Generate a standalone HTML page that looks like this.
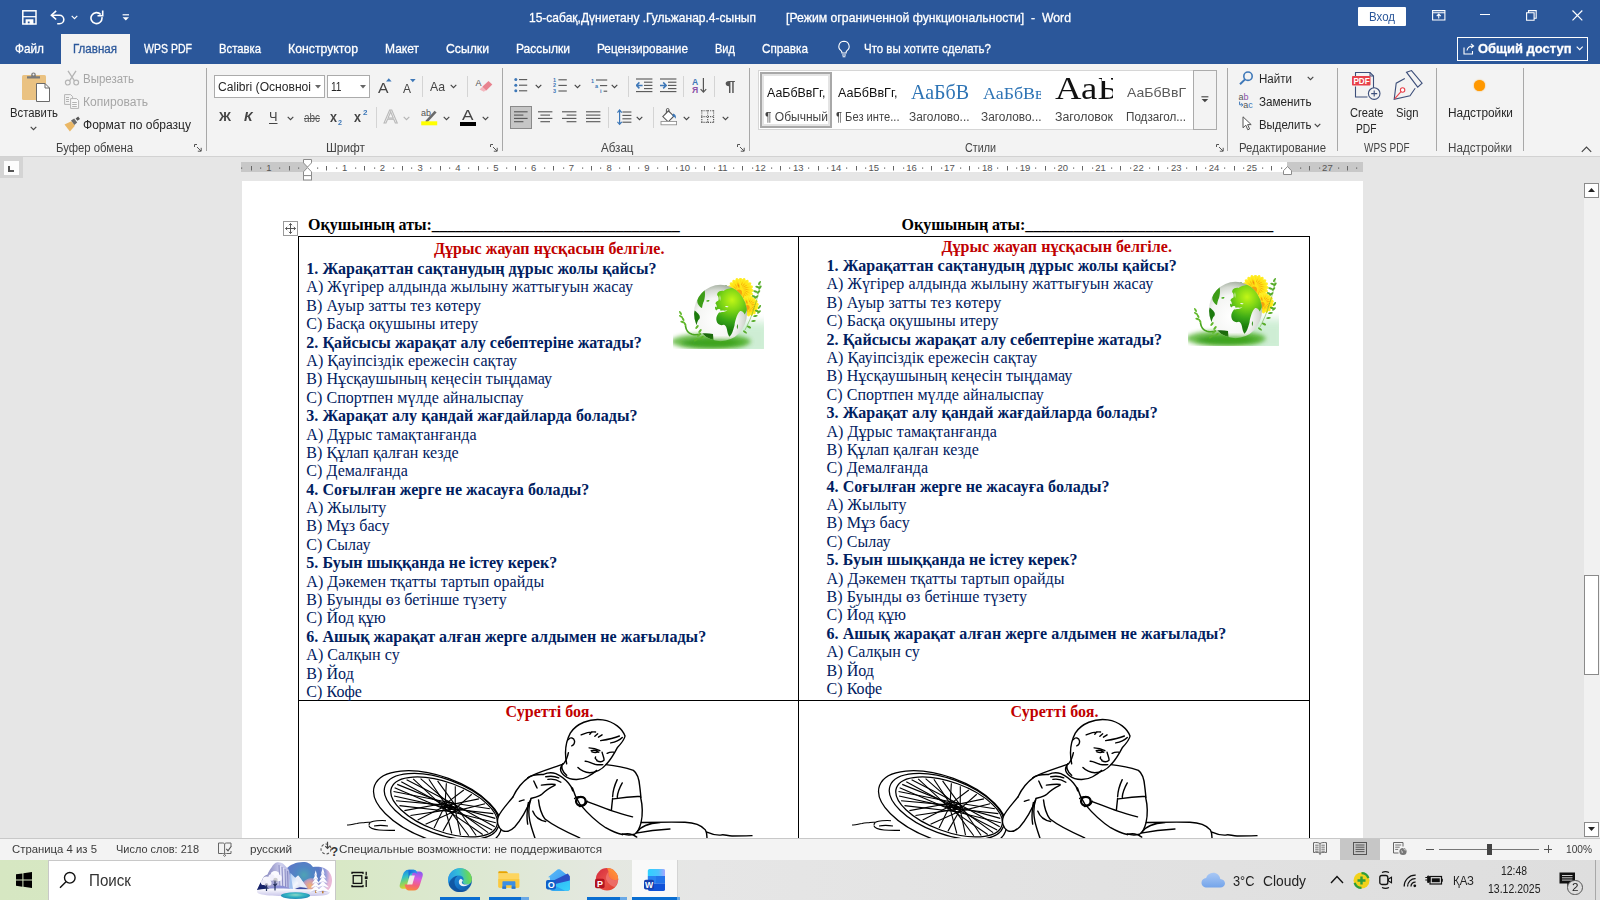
<!DOCTYPE html>
<html lang="ru"><head><meta charset="utf-8"><title>Word</title>
<style>
html,body{margin:0;padding:0;width:1600px;height:900px;overflow:hidden;background:#e6e6e6;font-family:"Liberation Sans",sans-serif}
#r{position:relative;width:1600px;height:900px;overflow:hidden}
.b{position:absolute;display:block}
.t{position:absolute;white-space:pre;transform-origin:0 50%;font-family:"Liberation Sans",sans-serif}
.d{position:absolute;white-space:pre;font-family:"Liberation Serif",serif;font-size:16px;line-height:18px;color:#002060;letter-spacing:.055px}
</style></head><body><div id="r">
<!-- p_title -->
<div class="b" style="left:0px;top:0px;width:1600px;height:64px;background:#2b579a"></div><svg class="b" style="left:21.5px;top:9.5px;" width="15" height="15" viewBox="0 0 15 15"><rect x=".8" y=".8" width="13.200" height="13.200" fill="none" stroke="#fff" stroke-width="1.500"/><path d="M1 6.700h13" stroke="#fff" stroke-width="1.300"/><path d="M3.600 9.200h7.800v5h-3.800v-2.600h-1.800v2.600h-2.200z" fill="#fff"/></svg><svg class="b" style="left:50px;top:9.5px;" width="16" height="15" viewBox="0 0 16 15"><path d="M6.200 .9l-4.800 4.300 4.800 4.300" fill="none" stroke="#fff" stroke-width="1.600"/><path d="M1.800 5.200h7.700a4.300 4.300 0 0 1 0 8.600h-2.300" fill="none" stroke="#fff" stroke-width="1.600"/></svg><svg class="b" style="left:71px;top:15px;" width="7" height="5" viewBox="0 0 7 5"><path d="M.7.800l2.800 2.800 2.800-2.800" fill="none" stroke="#fff" stroke-width="1.100"/></svg><svg class="b" style="left:89.5px;top:9.5px;" width="15" height="15" viewBox="0 0 15 15"><path d="M11.900 7.200a5.500 5.500 0 1 1-1.200-2.600" fill="none" stroke="#fff" stroke-width="1.600"/><path d="M12.700 .6v5.200h-5.200" fill="none" stroke="#fff" stroke-width="1.600"/></svg><svg class="b" style="left:122px;top:13.5px;" width="8" height="7" viewBox="0 0 8 7"><path d="M.6 .8h6.400" stroke="#fff" stroke-width="1.200"/><path d="M.6 3.300h6.400l-3.200 3.200z" fill="#fff"/></svg><span class="t" style="left:529px;top:9px;font-size:13px;line-height:17px;color:#fff;-webkit-text-stroke:.3px #fff;transform:scaleX(0.9243);">15-сабақ,Дүниетану .Гульжанар.4-сынып</span><span class="t" style="left:786px;top:9px;font-size:13px;line-height:17px;color:#fff;-webkit-text-stroke:.3px #fff;transform:scaleX(0.9418);">[Режим ограниченной функциональности]  -  Word</span><div class="b" style="left:1358px;top:7px;width:48px;height:19px;background:#fff;border-radius:1px"></div><span class="t" style="left:1369px;top:8.5px;font-size:12px;line-height:16px;color:#2b579a;transform:scaleX(0.9574);">Вход</span><svg class="b" style="left:1432px;top:9.5px;" width="14" height="11" viewBox="0 0 14 11"><path d="M.6.600h12.300v9.400h-12.300z M.6 2.800h12.300" fill="none" stroke="#fff" stroke-width="1.100"/><path d="M6.750 4.200v4.400 M4.700 6.100l2.050-2 2.050 2" fill="none" stroke="#fff" stroke-width="1.100"/></svg><div class="b" style="left:1480px;top:14px;width:10px;height:1px;background:#fff"></div><svg class="b" style="left:1526px;top:9.5px;" width="11" height="11" viewBox="0 0 11 11"><path d="M.6 2.700h7.500v7.500h-7.500z M2.600 2.600v-2h7.600v7.600h-2" fill="none" stroke="#fff" stroke-width="1.100"/></svg><svg class="b" style="left:1571.5px;top:9.5px;" width="11" height="11" viewBox="0 0 11 11"><path d="M.5.500l9.800 9.800 M10.300.500l-9.800 9.800" stroke="#fff" stroke-width="1.200"/></svg><div class="b" style="left:61px;top:34px;width:69px;height:30px;background:#f3f3f3"></div><span class="t" style="left:15px;top:40px;font-size:13px;line-height:17px;color:#fff;-webkit-text-stroke:.3px #fff;transform:scaleX(0.9071);">Файл</span><span class="t" style="left:73px;top:40px;font-size:13px;line-height:17px;color:#2b579a;transform:scaleX(0.8892);-webkit-text-stroke:.3px #2b579a;">Главная</span><span class="t" style="left:144px;top:40px;font-size:13px;line-height:17px;color:#fff;-webkit-text-stroke:.3px #fff;transform:scaleX(0.8103);">WPS PDF</span><span class="t" style="left:219px;top:40px;font-size:13px;line-height:17px;color:#fff;-webkit-text-stroke:.3px #fff;transform:scaleX(0.8691);">Вставка</span><span class="t" style="left:288px;top:40px;font-size:13px;line-height:17px;color:#fff;-webkit-text-stroke:.3px #fff;transform:scaleX(0.9444);">Конструктор</span><span class="t" style="left:385px;top:40px;font-size:13px;line-height:17px;color:#fff;-webkit-text-stroke:.3px #fff;transform:scaleX(0.9240);">Макет</span><span class="t" style="left:446px;top:40px;font-size:13px;line-height:17px;color:#fff;-webkit-text-stroke:.3px #fff;transform:scaleX(0.9392);">Ссылки</span><span class="t" style="left:516px;top:40px;font-size:13px;line-height:17px;color:#fff;-webkit-text-stroke:.3px #fff;transform:scaleX(0.9253);">Рассылки</span><span class="t" style="left:597px;top:40px;font-size:13px;line-height:17px;color:#fff;-webkit-text-stroke:.3px #fff;transform:scaleX(0.9065);">Рецензирование</span><span class="t" style="left:715px;top:40px;font-size:13px;line-height:17px;color:#fff;-webkit-text-stroke:.3px #fff;transform:scaleX(0.8499);">Вид</span><span class="t" style="left:762px;top:40px;font-size:13px;line-height:17px;color:#fff;-webkit-text-stroke:.3px #fff;transform:scaleX(0.9020);">Справка</span><svg class="b" style="left:837px;top:40px;" width="14" height="18" viewBox="0 0 14 18"><path d="M7 1.2a5.2 5.2 0 0 0-3 9.4c.6.5.9 1 .9 1.8v.6h4.2v-.6c0-.8.3-1.3.9-1.8a5.2 5.2 0 0 0-3-9.4z M5 15h4 M5.6 16.8h2.8" fill="none" stroke="#fff" stroke-width="1.1"/></svg><span class="t" style="left:864px;top:40px;font-size:13px;line-height:17px;color:#fff;-webkit-text-stroke:.3px #fff;transform:scaleX(0.8837);">Что вы хотите сделать?</span><div class="b" style="left:1457px;top:37px;width:131px;height:24px;border:1px solid #fff;box-sizing:border-box"></div><svg class="b" style="left:1463px;top:43px;" width="12" height="12" viewBox="0 0 12 12"><path d="M1 4.5v6.5h8.5v-3 M4 7.5c.5-3 2.5-4.5 6-4.5 M8 .8l2.6 2.2-2.6 2.2" fill="none" stroke="#fff" stroke-width="1.1"/></svg><span class="t" style="left:1478px;top:39.5px;font-size:13.5px;line-height:18px;color:#fff;font-weight:700;-webkit-text-stroke:.3px #fff;transform:scaleX(0.9605);">Общий доступ</span><svg class="b" style="left:1576px;top:46px;" width="8" height="5" viewBox="0 0 8 5"><path d="M.7.7l3 3 3-3" fill="none" stroke="#fff" stroke-width="1.1"/></svg>
<!-- p_ribbon -->
<div class="b" style="left:0px;top:64px;width:1600px;height:92px;background:#f3f3f3"></div><div class="b" style="left:0px;top:156px;width:1600px;height:1px;background:#d2d2d2"></div><svg class="b" style="left:20px;top:70px;" width="32" height="34" viewBox="0 0 32 34"><rect x="2" y="5" width="24" height="25" rx="1.5" fill="#eac282"/><path d="M7 8.5v-2.2h4.2v-1.6a2 2 0 0 1 4.6 0v1.6h4.2v2.2z" fill="#7a7a7a"/><circle cx="13.5" cy="4.6" r="1" fill="#f3f3f3"/><path d="M16.5 13.5h8.5l4.5 4.5v13.5h-13z" fill="#fff" stroke="#6a6a6a" stroke-width="1"/><path d="M25 13.5v4.5h4.5" fill="none" stroke="#6a6a6a" stroke-width="1"/></svg><span class="t" style="left:10px;top:105px;font-size:12.5px;line-height:16px;color:#262626;transform:scaleX(0.9057);">Вставить</span><svg class="b" style="left:30px;top:126px;" width="7" height="5" viewBox="0 0 7 5"><path d="M.7.9l2.8 2.8 2.8-2.8" fill="none" stroke="#444" stroke-width="1.15"/></svg><svg class="b" style="left:64px;top:70px;" width="16" height="16" viewBox="0 0 16 16"><path d="M4 .8l6.5 10 M12 .8l-6.5 10" stroke="#b4b4b4" stroke-width="1.3" fill="none"/><circle cx="3.8" cy="12.6" r="2.4" fill="none" stroke="#b4b4b4" stroke-width="1.2"/><circle cx="12.2" cy="12.6" r="2.4" fill="none" stroke="#b4b4b4" stroke-width="1.2"/></svg><span class="t" style="left:83px;top:71px;font-size:12.5px;line-height:16px;color:#a6a6a6;transform:scaleX(0.9171);">Вырезать</span><svg class="b" style="left:64px;top:94px;" width="16" height="15" viewBox="0 0 16 15"><path d="M.6.6h6l2 2v7.8h-8z" fill="#f3f3f3" stroke="#b4b4b4"/><path d="M2 3.5h3M2 5.5h3M2 7.5h3" stroke="#b4b4b4"/><path d="M6.6 4.6h6l2 2v7.8h-8z" fill="#f8f8f8" stroke="#b4b4b4"/><path d="M8.2 8.5h4.6M8.2 10.5h4.6M8.2 12.5h4.6" stroke="#b4b4b4"/></svg><span class="t" style="left:83px;top:94px;font-size:12.5px;line-height:16px;color:#a6a6a6;transform:scaleX(0.9656);">Копировать</span><svg class="b" style="left:64px;top:116px;" width="17" height="16" viewBox="0 0 17 16"><path d="M.5 8.5l6.8-3.3 3.6 4.6-5 5.6z" fill="#eab765"/><path d="M7 4.6l3.2-2 3 4-2.8 2.4z" fill="#6a6a6a"/><path d="M11.6 2.4l2.6-1.8 1.8 2.3-2.6 1.9z" fill="#555"/></svg><span class="t" style="left:83px;top:117px;font-size:12.5px;line-height:16px;color:#262626;transform:scaleX(0.9635);">Формат по образцу</span><span class="t" style="left:56px;top:140px;font-size:12px;line-height:16px;color:#444;transform:scaleX(0.9442);">Буфер обмена</span><svg class="b" style="left:194px;top:144px;" width="8" height="8" viewBox="0 0 8 8"><path d="M.5 3v-2.5h2.5 M3 3l4 4 M7.2 3.8v3.4h-3.4" fill="none" stroke="#555" stroke-width="1"/></svg><div class="b" style="left:206px;top:68px;width:1px;height:83px;background:#a8a8a8"></div><div class="b" style="left:214px;top:75px;width:111px;height:23px;background:#fff;border:1px solid #ababab;box-sizing:border-box"></div><span class="t" style="left:218px;top:78.5px;font-size:12.5px;line-height:16px;color:#262626;transform:scaleX(0.9670);">Calibri (Основноі</span><svg class="b" style="left:314.5px;top:84.5px;" width="6" height="4" viewBox="0 0 6 4"><path d="M0 0h6l-3 3.4z" fill="#666"/></svg><div class="b" style="left:327px;top:75px;width:43px;height:23px;background:#fff;border:1px solid #ababab;box-sizing:border-box"></div><span class="t" style="left:330.5px;top:78.5px;font-size:12.5px;line-height:16px;color:#262626;transform:scaleX(0.8087);">11</span><svg class="b" style="left:359.5px;top:84.5px;" width="6" height="4" viewBox="0 0 6 4"><path d="M0 0h6l-3 3.4z" fill="#666"/></svg><span class="t" style="left:378px;top:77.5px;font-size:15px;line-height:20px;color:#444;transform:scaleX(1.0484);">A</span><svg class="b" style="left:386px;top:78px;" width="6" height="4" viewBox="0 0 6 4"><path d="M0 3.5h5.6l-2.8-3.3z" fill="#3e78b8"/></svg><span class="t" style="left:403px;top:81px;font-size:12px;line-height:16px;color:#444;transform:scaleX(0.9981);">A</span><svg class="b" style="left:410px;top:79px;" width="6" height="4" viewBox="0 0 6 4"><path d="M0 0h5.6l-2.8 3.3z" fill="#3e78b8"/></svg><div class="b" style="left:422px;top:76px;width:1px;height:21px;background:#d4d4d4"></div><span class="t" style="left:430px;top:77.5px;font-size:13px;line-height:17px;color:#444;transform:scaleX(0.9430);">Aa</span><svg class="b" style="left:450px;top:84px;" width="7" height="5" viewBox="0 0 7 5"><path d="M.7.9l2.8 2.8 2.8-2.8" fill="none" stroke="#444" stroke-width="1.15"/></svg><div class="b" style="left:467px;top:76px;width:1px;height:21px;background:#d4d4d4"></div><svg class="b" style="left:475px;top:77px;" width="18" height="17" viewBox="0 0 18 17"><text x="0.5" y="9" font-family="Liberation Sans, sans-serif" font-size="9" fill="#555">A</text><path d="M7.5 9.5l6-5.5 3.8 3.6-6 5.8-3-.6z" fill="#e8838f"/><path d="M4.5 12.5l3-2.8 3.4 3.3-2 1.8z" fill="#f3b6bd"/></svg><span class="t" style="left:219px;top:108px;font-size:13.5px;line-height:18px;color:#444;font-weight:700;transform:scaleX(0.9834);">Ж</span><span class="t" style="left:244px;top:108px;font-size:13.5px;line-height:18px;color:#444;font-weight:700;font-style:italic;transform:scaleX(1.0226);">К</span><span class="t" style="left:268.5px;top:108px;font-size:13.5px;line-height:18px;color:#444;transform:scaleX(0.9444);text-decoration:underline;text-underline-offset:2px">Ч</span><svg class="b" style="left:286.5px;top:116px;" width="7" height="5" viewBox="0 0 7 5"><path d="M.7.9l2.8 2.8 2.8-2.8" fill="none" stroke="#444" stroke-width="1.15"/></svg><span class="t" style="left:304px;top:109.5px;font-size:12px;line-height:16px;color:#555;transform:scaleX(0.8265);text-decoration:line-through">abc</span><span class="t" style="left:330px;top:108px;font-size:14px;line-height:18px;color:#444;font-weight:700;transform:scaleX(0.8978);">x</span><span class="t" style="left:338px;top:118px;font-size:7px;line-height:9px;color:#3e78b8;font-weight:700;transform:scaleX(1.0240);">2</span><span class="t" style="left:354px;top:108px;font-size:14px;line-height:18px;color:#444;font-weight:700;transform:scaleX(0.8978);">x</span><span class="t" style="left:362.5px;top:108px;font-size:7px;line-height:9px;color:#3e78b8;font-weight:700;transform:scaleX(1.1520);">2</span><div class="b" style="left:375.5px;top:107px;width:1px;height:21px;background:#d4d4d4"></div><span class="t" style="left:384px;top:105px;font-size:19px;line-height:24px;color:#f3f3f3;-webkit-text-stroke:1px #b9b9b9;transform:scaleX(1.05)">A</span><svg class="b" style="left:403px;top:116px;" width="7" height="5" viewBox="0 0 7 5"><path d="M.7.9l2.8 2.8 2.8-2.8" fill="none" stroke="#b4b4b4" stroke-width="1.15"/></svg><svg class="b" style="left:420px;top:107px;" width="18" height="19" viewBox="0 0 18 19"><text x="1" y="8.5" font-family="Liberation Sans, sans-serif" font-size="9" fill="#555">ab</text><path d="M6 13.2l8.6-9.4 2 1.8-8.6 9.2-2.6.6z" fill="#6a6a6a"/><rect x="1.2" y="14.3" width="16" height="4" fill="#ffff00"/></svg><svg class="b" style="left:443px;top:116px;" width="7" height="5" viewBox="0 0 7 5"><path d="M.7.9l2.8 2.8 2.8-2.8" fill="none" stroke="#444" stroke-width="1.15"/></svg><span class="t" style="left:462px;top:105px;font-size:15px;line-height:20px;color:#444;transform:scaleX(1.1482);">A</span><div class="b" style="left:460px;top:121.5px;width:16px;height:4px;background:#000"></div><svg class="b" style="left:482px;top:116px;" width="7" height="5" viewBox="0 0 7 5"><path d="M.7.9l2.8 2.8 2.8-2.8" fill="none" stroke="#444" stroke-width="1.15"/></svg><span class="t" style="left:326px;top:140px;font-size:12px;line-height:16px;color:#444;transform:scaleX(0.9877);">Шрифт</span><svg class="b" style="left:490px;top:144px;" width="8" height="8" viewBox="0 0 8 8"><path d="M.5 3v-2.5h2.5 M3 3l4 4 M7.2 3.8v3.4h-3.4" fill="none" stroke="#555" stroke-width="1"/></svg><div class="b" style="left:501.5px;top:68px;width:1px;height:83px;background:#a8a8a8"></div><svg class="b" style="left:513.5px;top:78px;" width="14" height="15" viewBox="0 0 14 15"><circle cx="1.8" cy="1.6" r="1.5" fill="#3e78b8"/><path d="M5 1.6h8.2" stroke="#555" stroke-width="1.1"/><circle cx="1.8" cy="7.2" r="1.5" fill="#3e78b8"/><path d="M5 7.2h8.2" stroke="#555" stroke-width="1.1"/><circle cx="1.8" cy="12.8" r="1.5" fill="#3e78b8"/><path d="M5 12.8h8.2" stroke="#555" stroke-width="1.1"/></svg><svg class="b" style="left:534.5px;top:84px;" width="7" height="5" viewBox="0 0 7 5"><path d="M.7.9l2.8 2.8 2.8-2.8" fill="none" stroke="#444" stroke-width="1.15"/></svg><svg class="b" style="left:552.5px;top:78px;" width="14" height="16" viewBox="0 0 14 16"><text x="0" y="3.8" font-family="Liberation Sans, sans-serif" font-size="5.5" font-weight="700" fill="#3e78b8">1</text><path d="M5.4 1.8h8.4" stroke="#555" stroke-width="1.1"/><text x="0" y="9.4" font-family="Liberation Sans, sans-serif" font-size="5.5" font-weight="700" fill="#3e78b8">2</text><path d="M5.4 7.4h8.4" stroke="#555" stroke-width="1.1"/><text x="0" y="15" font-family="Liberation Sans, sans-serif" font-size="5.5" font-weight="700" fill="#3e78b8">3</text><path d="M5.4 13h8.4" stroke="#555" stroke-width="1.1"/></svg><svg class="b" style="left:573.5px;top:84px;" width="7" height="5" viewBox="0 0 7 5"><path d="M.7.9l2.8 2.8 2.8-2.8" fill="none" stroke="#444" stroke-width="1.15"/></svg><svg class="b" style="left:590.5px;top:78px;" width="17" height="16" viewBox="0 0 17 16"><text x="0" y="4.6" font-family="Liberation Sans, sans-serif" font-size="5.5" font-weight="700" fill="#3e78b8">1</text><path d="M5 2h11.2" stroke="#555" stroke-width="1.1"/><text x="4" y="10" font-family="Liberation Sans, sans-serif" font-size="5.5" font-weight="700" fill="#3e78b8">a</text><path d="M9 7.6h7.2" stroke="#555" stroke-width="1.1"/><text x="9" y="15.4" font-family="Liberation Sans, sans-serif" font-size="5.5" font-weight="700" fill="#3e78b8">i</text><path d="M12.6 13.2h3.6" stroke="#555" stroke-width="1.1"/></svg><svg class="b" style="left:611px;top:84px;" width="7" height="5" viewBox="0 0 7 5"><path d="M.7.9l2.8 2.8 2.8-2.8" fill="none" stroke="#444" stroke-width="1.15"/></svg><div class="b" style="left:628px;top:76px;width:1px;height:21px;background:#d4d4d4"></div><svg class="b" style="left:635.5px;top:78px;" width="17" height="15" viewBox="0 0 17 15"><path d="M0 1H16.4" stroke="#555" stroke-width="1.1"/><path d="M8 4.2H16.4" stroke="#555" stroke-width="1.1"/><path d="M8 7.4H16.4" stroke="#555" stroke-width="1.1"/><path d="M8 10.6H16.4" stroke="#555" stroke-width="1.1"/><path d="M0 13.6H16.4" stroke="#555" stroke-width="1.1"/><path d="M.6 7.4h6 M3.4 4.4l-3 3 3 3" fill="none" stroke="#3e78b8" stroke-width="1.5"/></svg><svg class="b" style="left:660px;top:78px;" width="17" height="15" viewBox="0 0 17 15"><path d="M0 1H16.4" stroke="#555" stroke-width="1.1"/><path d="M8 4.2H16.4" stroke="#555" stroke-width="1.1"/><path d="M8 7.4H16.4" stroke="#555" stroke-width="1.1"/><path d="M8 10.6H16.4" stroke="#555" stroke-width="1.1"/><path d="M0 13.6H16.4" stroke="#555" stroke-width="1.1"/><path d="M0 7.4h6 M3.2 4.4l3 3-3 3" fill="none" stroke="#3e78b8" stroke-width="1.5"/></svg><div class="b" style="left:683px;top:76px;width:1px;height:21px;background:#d4d4d4"></div><svg class="b" style="left:692px;top:77px;" width="16" height="17" viewBox="0 0 16 17"><text x="0" y="7.6" font-family="Liberation Sans, sans-serif" font-size="8.6" font-weight="700" fill="#3e78b8">А</text><text x="0" y="15.8" font-family="Liberation Sans, sans-serif" font-size="8.6" font-weight="700" fill="#8a52a8">Я</text><path d="M11.4 1v14 M8.6 12.2l2.8 3 2.8-3" fill="none" stroke="#555" stroke-width="1.2"/></svg><div class="b" style="left:714px;top:76px;width:1px;height:21px;background:#d4d4d4"></div><span class="t" style="left:724.5px;top:76px;font-size:15px;line-height:20px;color:#555;font-weight:700;transform:scaleX(1.2584);">¶</span><div class="b" style="left:510px;top:106px;width:22px;height:23px;background:#c6c6c6;border:1px solid #8a8a8a;box-sizing:border-box"></div><svg class="b" style="left:513.5px;top:110px;" width="15" height="14" viewBox="0 0 15 14"><path d="M0 1.8H13.6" stroke="#555" stroke-width="1.1"/><path d="M0 5.1H9.4" stroke="#555" stroke-width="1.1"/><path d="M0 8.4H13.6" stroke="#555" stroke-width="1.1"/><path d="M0 11.7H9.4" stroke="#555" stroke-width="1.1"/></svg><svg class="b" style="left:537.5px;top:110px;" width="15" height="14" viewBox="0 0 15 14"><path d="M0 1.8H14.4" stroke="#555" stroke-width="1.1"/><path d="M2.4 5.1H12" stroke="#555" stroke-width="1.1"/><path d="M0 8.4H14.4" stroke="#555" stroke-width="1.1"/><path d="M2.4 11.7H12" stroke="#555" stroke-width="1.1"/></svg><svg class="b" style="left:561.5px;top:110px;" width="15" height="14" viewBox="0 0 15 14"><path d="M0 1.8H14.4" stroke="#555" stroke-width="1.1"/><path d="M4.6 5.1H14.4" stroke="#555" stroke-width="1.1"/><path d="M0 8.4H14.4" stroke="#555" stroke-width="1.1"/><path d="M4.6 11.7H14.4" stroke="#555" stroke-width="1.1"/></svg><svg class="b" style="left:585.5px;top:110px;" width="15" height="14" viewBox="0 0 15 14"><path d="M0 1.8H14.4" stroke="#555" stroke-width="1.1"/><path d="M0 5.1H14.4" stroke="#555" stroke-width="1.1"/><path d="M0 8.4H14.4" stroke="#555" stroke-width="1.1"/><path d="M0 11.7H14.4" stroke="#555" stroke-width="1.1"/></svg><div class="b" style="left:608px;top:107px;width:1px;height:21px;background:#d4d4d4"></div><svg class="b" style="left:616.5px;top:109px;" width="15" height="17" viewBox="0 0 15 17"><path d="M5.4 3H14.4" stroke="#555" stroke-width="1.1"/><path d="M5.4 6.4H14.4" stroke="#555" stroke-width="1.1"/><path d="M5.4 9.8H14.4" stroke="#555" stroke-width="1.1"/><path d="M5.4 13.2H14.4" stroke="#555" stroke-width="1.1"/><path d="M2.6 1v14.4 M.4 3.6l2.2-2.6 2.2 2.6 M.4 12.8l2.2 2.6 2.2-2.6" fill="none" stroke="#3e78b8" stroke-width="1.2"/></svg><svg class="b" style="left:636px;top:116px;" width="7" height="5" viewBox="0 0 7 5"><path d="M.7.9l2.8 2.8 2.8-2.8" fill="none" stroke="#444" stroke-width="1.15"/></svg><div class="b" style="left:653px;top:107px;width:1px;height:21px;background:#d4d4d4"></div><svg class="b" style="left:660px;top:108px;" width="18" height="18" viewBox="0 0 18 18"><path d="M2.8 8.6l5.6-5.8 5.4 5.4-5.6 5.6z" fill="#fff" stroke="#555" stroke-width="1.1"/><path d="M6.4 5.2v-3.4a1.3 1.3 0 0 1 2.6 0v2.4" fill="none" stroke="#555" stroke-width="1"/><path d="M13.2 5.6c2 .6 3.2 2.4 2.6 5.2-1-1.6-1.8-2.4-3.6-2.8z" fill="#3e78b8"/><rect x="1" y="13.4" width="15.6" height="3.4" fill="#fff" stroke="#888" stroke-width=".8"/></svg><svg class="b" style="left:683px;top:116px;" width="7" height="5" viewBox="0 0 7 5"><path d="M.7.9l2.8 2.8 2.8-2.8" fill="none" stroke="#444" stroke-width="1.15"/></svg><svg class="b" style="left:700.5px;top:110px;" width="14" height="14" viewBox="0 0 14 14"><path d="M.3 0.8h12.8" stroke="#555" stroke-width="1.1" stroke-dasharray="1.1 1.1"/><path d="M.3 6.6h12.8" stroke="#555" stroke-width="1.1" stroke-dasharray="1.1 1.1"/><path d="M.3 12.4h12.8" stroke="#555" stroke-width="1.1" stroke-dasharray="1.1 1.1"/><path d="M0.8 .3v12.6" stroke="#555" stroke-width="1.1" stroke-dasharray="1.1 1.1"/><path d="M6.7 .3v12.6" stroke="#555" stroke-width="1.1" stroke-dasharray="1.1 1.1"/><path d="M12.6 .3v12.6" stroke="#555" stroke-width="1.1" stroke-dasharray="1.1 1.1"/></svg><svg class="b" style="left:722px;top:116px;" width="7" height="5" viewBox="0 0 7 5"><path d="M.7.9l2.8 2.8 2.8-2.8" fill="none" stroke="#444" stroke-width="1.15"/></svg><span class="t" style="left:601px;top:140px;font-size:12px;line-height:16px;color:#444;transform:scaleX(0.9652);">Абзац</span><svg class="b" style="left:737px;top:144px;" width="8" height="8" viewBox="0 0 8 8"><path d="M.5 3v-2.5h2.5 M3 3l4 4 M7.2 3.8v3.4h-3.4" fill="none" stroke="#555" stroke-width="1"/></svg><div class="b" style="left:748.5px;top:68px;width:1px;height:83px;background:#a8a8a8"></div>
<!-- p_ribbon2 -->
<div class="b" style="left:758px;top:70px;width:436px;height:60px;background:#fff;border:1px solid #d6d6d6;box-sizing:border-box"></div><div class="b" style="left:760px;top:72px;width:72px;height:56px;background:#fff;border:2px solid #a8a8a8;box-sizing:border-box;box-shadow:inset 0 0 0 2px #e4e4e4"></div><span class="t" style="left:766.5px;top:84px;font-size:13px;line-height:17px;color:#111;transform:scaleX(0.9524);">АаБбВвГг,</span><span class="t" style="left:764.5px;top:109px;font-size:12px;line-height:16px;color:#444;transform:scaleX(1.0027);">¶ Обычный</span><span class="t" style="left:838px;top:84px;font-size:13px;line-height:17px;color:#111;transform:scaleX(0.9687);">АаБбВвГг,</span><span class="t" style="left:836px;top:109px;font-size:12px;line-height:16px;color:#444;transform:scaleX(0.9300);">¶ Без инте...</span><span class="t" style="left:911px;top:78px;font-size:21.5px;line-height:28px;color:#2e74b5;font-family:'Liberation Serif', serif;transform:scaleX(0.9292);">АаБбВ</span><span class="t" style="left:909px;top:109px;font-size:12px;line-height:16px;color:#444;transform:scaleX(0.9890);">Заголово...</span><span class="t" style="left:982.5px;top:81.5px;font-size:17.5px;line-height:23px;color:#2e74b5;font-family:'Liberation Serif', serif;transform:scaleX(1.0243);">АаБбВв</span><div class="b" style="left:1041px;top:72px;width:10px;height:40px;background:#fff"></div><span class="t" style="left:981px;top:109px;font-size:12px;line-height:16px;color:#444;transform:scaleX(0.9890);">Заголово...</span><div class="b" style="left:1052px;top:71px;width:61px;height:36px;overflow:hidden"><span class="t" style="left:2.5px;top:-3.2px;font-size:31.5px;line-height:41px;color:#111;font-family:'Liberation Serif', serif;transform:scaleX(1.1671);">АаБ</span><div class="b" style="left:50px;top:6px;width:8.500px;height:3.500px;background:#fff"></div></div><span class="t" style="left:1055px;top:109px;font-size:12px;line-height:16px;color:#444;transform:scaleX(1.0280);">Заголовок</span><span class="t" style="left:1126.5px;top:84px;font-size:13px;line-height:17px;color:#5a5a5a;transform:scaleX(1.0798);">АаБбВвГ</span><span class="t" style="left:1125.5px;top:109px;font-size:12px;line-height:16px;color:#444;transform:scaleX(0.9717);">Подзагол...</span><div class="b" style="left:1193px;top:70px;width:24px;height:60px;background:#f3f3f3;border:1px solid #ababab;box-sizing:border-box"></div><svg class="b" style="left:1201px;top:96px;" width="8" height="7" viewBox="0 0 8 7"><path d="M.4.8h7" stroke="#444" stroke-width="1.1"/><path d="M.6 3h6.6l-3.3 3.3z" fill="#444"/></svg><span class="t" style="left:964.5px;top:140px;font-size:12px;line-height:16px;color:#444;transform:scaleX(0.8965);">Стили</span><svg class="b" style="left:1216px;top:144px;" width="8" height="8" viewBox="0 0 8 8"><path d="M.5 3v-2.5h2.5 M3 3l4 4 M7.2 3.8v3.4h-3.4" fill="none" stroke="#555" stroke-width="1"/></svg><div class="b" style="left:1227px;top:68px;width:1px;height:83px;background:#a8a8a8"></div><svg class="b" style="left:1239px;top:71px;" width="15" height="14" viewBox="0 0 15 14"><circle cx="9" cy="5.2" r="4.2" fill="none" stroke="#3e78b8" stroke-width="1.6"/><path d="M6 8.4l-5 4.8" stroke="#3e78b8" stroke-width="2"/></svg><span class="t" style="left:1258.5px;top:70.5px;font-size:12.5px;line-height:16px;color:#262626;transform:scaleX(0.9251);">Найти</span><svg class="b" style="left:1306.5px;top:76px;" width="7" height="5" viewBox="0 0 7 5"><path d="M.7.9l2.8 2.8 2.8-2.8" fill="none" stroke="#444" stroke-width="1.15"/></svg><svg class="b" style="left:1238px;top:93px;" width="18" height="16" viewBox="0 0 18 16"><text x="0.5" y="7.2" font-family="Liberation Sans, sans-serif" font-size="9" fill="#555">a</text><text x="5.6" y="7.2" font-family="Liberation Sans, sans-serif" font-size="9" fill="#8a52a8">b</text><text x="5.2" y="14.8" font-family="Liberation Sans, sans-serif" font-size="9" fill="#555">a</text><text x="10.2" y="14.8" font-family="Liberation Sans, sans-serif" font-size="9" fill="#3e78b8">c</text><path d="M1.6 8.6v3.2h3 M3.4 10.2l1.6 1.6-1.6 1.6" fill="none" stroke="#3e78b8" stroke-width="1"/></svg><span class="t" style="left:1258.5px;top:94px;font-size:12.5px;line-height:16px;color:#262626;transform:scaleX(0.9346);">Заменить</span><svg class="b" style="left:1242px;top:116px;" width="11" height="16" viewBox="0 0 11 16"><path d="M1 .8v11l2.8-2.6 2 4.6 1.8-.8-2-4.4h3.6z" fill="#fff" stroke="#555" stroke-width="1"/></svg><span class="t" style="left:1258.5px;top:117px;font-size:12.5px;line-height:16px;color:#262626;transform:scaleX(0.9103);">Выделить</span><svg class="b" style="left:1314px;top:123px;" width="7" height="5" viewBox="0 0 7 5"><path d="M.7.9l2.8 2.8 2.8-2.8" fill="none" stroke="#444" stroke-width="1.15"/></svg><span class="t" style="left:1238.5px;top:140px;font-size:12px;line-height:16px;color:#444;transform:scaleX(0.9516);">Редактирование</span><div class="b" style="left:1336.5px;top:68px;width:1px;height:83px;background:#a8a8a8"></div><svg class="b" style="left:1351px;top:71px;" width="32" height="30" viewBox="0 0 32 30"><path d="M4.5 5v-3.5h14.5l3.5 3.5v12 M4.500 15.5v10.500h12" fill="none" stroke="#3d4f7a" stroke-width="1.1"/><path d="M19 1.500v3.500h3.500" fill="none" stroke="#3d4f7a" stroke-width="1"/><rect x="1" y="5" width="18.500" height="9.600" rx=".8" fill="#e8414a"/><text x="2.400" y="12.600" font-family="Liberation Sans, sans-serif" font-size="8.200" font-weight="700" fill="#fff">PDF</text><circle cx="23.200" cy="22.600" r="5.800" fill="#f3f3f3" stroke="#3d4f7a" stroke-width="1.100"/><path d="M20.200 22.600h6 M23.200 19.600v6" stroke="#3d4f7a" stroke-width="1.100"/></svg><svg class="b" style="left:1393px;top:70px;" width="31" height="31" viewBox="0 0 31 31"><path d="M13.500 2.200l5-1.600 10.600 12.600-4.400 4z" fill="none" stroke="#3d4f7a" stroke-width="1.1"/><path d="M11.800 8.600l-8.600 4.600-2 16.200 15.800-3.600 5.200-7.600" fill="none" stroke="#3d4f7a" stroke-width="1.1"/><circle cx="9.600" cy="20" r="2.200" fill="#fff" stroke="#e8414a" stroke-width="1.1"/><path d="M1.600 28.800l6.400-7.200" stroke="#e8414a" stroke-width="1.1"/></svg><span class="t" style="left:1349.5px;top:105px;font-size:12.5px;line-height:16px;color:#262626;transform:scaleX(0.8926);">Create</span><span class="t" style="left:1355.5px;top:120.5px;font-size:12.5px;line-height:16px;color:#262626;transform:scaleX(0.8200);">PDF</span><span class="t" style="left:1396px;top:105px;font-size:12.5px;line-height:16px;color:#262626;transform:scaleX(0.8989);">Sign</span><span class="t" style="left:1363.5px;top:140px;font-size:12px;line-height:16px;color:#444;transform:scaleX(0.8322);">WPS PDF</span><div class="b" style="left:1436px;top:68px;width:1px;height:83px;background:#a8a8a8"></div><div class="b" style="left:1473.5px;top:79.5px;width:11px;height:11px;background:#ff9800;border-radius:50%;box-shadow:0 0 1.500px #ff9800"></div><span class="t" style="left:1447.5px;top:105px;font-size:12.5px;line-height:16px;color:#262626;transform:scaleX(0.9476);">Надстройки</span><span class="t" style="left:1448px;top:140px;font-size:12px;line-height:16px;color:#444;transform:scaleX(0.9720);">Надстройки</span><div class="b" style="left:1523px;top:68px;width:1px;height:83px;background:#a8a8a8"></div><svg class="b" style="left:1581px;top:146px;" width="11" height="7" viewBox="0 0 11 7"><path d="M.8 5.800l4.700-4.700 4.700 4.700" fill="none" stroke="#444" stroke-width="1.2"/></svg>
<!-- p_doc -->
<div class="b" style="left:0px;top:157px;width:1600px;height:681px;background:#e6e6e6"></div><div class="b" style="left:0px;top:157px;width:23px;height:21px;background:#d4d4d4"></div><div class="b" style="left:4px;top:160.5px;width:15px;height:14.5px;background:#fdfdfd"></div><svg class="b" style="left:8px;top:166px;" width="6" height="6" viewBox="0 0 6 6"><path d="M1 0v5h5" fill="none" stroke="#555" stroke-width="2"/></svg><div class="b" style="left:242px;top:181px;width:1121px;height:660px;background:#fff"></div><div class="b" style="left:241px;top:162px;width:66.5px;height:10px;background:#c8c8c8"></div><div class="b" style="left:307.5px;top:162px;width:979.5px;height:10px;background:#fff"></div><div class="b" style="left:1287px;top:162px;width:76px;height:10px;background:#c8c8c8"></div><span class="t" style="left:259px;top:162.500px;width:20px;text-align:center;font-size:9.500px;line-height:10px;color:#555;transform:none">1</span><span class="t" style="left:334.6px;top:162.500px;width:20px;text-align:center;font-size:9.500px;line-height:10px;color:#555;transform:none">1</span><span class="t" style="left:372.4px;top:162.500px;width:20px;text-align:center;font-size:9.500px;line-height:10px;color:#555;transform:none">2</span><span class="t" style="left:410.2px;top:162.500px;width:20px;text-align:center;font-size:9.500px;line-height:10px;color:#555;transform:none">3</span><span class="t" style="left:448px;top:162.500px;width:20px;text-align:center;font-size:9.500px;line-height:10px;color:#555;transform:none">4</span><span class="t" style="left:485.8px;top:162.500px;width:20px;text-align:center;font-size:9.500px;line-height:10px;color:#555;transform:none">5</span><span class="t" style="left:523.6px;top:162.500px;width:20px;text-align:center;font-size:9.500px;line-height:10px;color:#555;transform:none">6</span><span class="t" style="left:561.4px;top:162.500px;width:20px;text-align:center;font-size:9.500px;line-height:10px;color:#555;transform:none">7</span><span class="t" style="left:599.2px;top:162.500px;width:20px;text-align:center;font-size:9.500px;line-height:10px;color:#555;transform:none">8</span><span class="t" style="left:637px;top:162.500px;width:20px;text-align:center;font-size:9.500px;line-height:10px;color:#555;transform:none">9</span><span class="t" style="left:674.8px;top:162.500px;width:20px;text-align:center;font-size:9.500px;line-height:10px;color:#555;transform:none">10</span><span class="t" style="left:712.6px;top:162.500px;width:20px;text-align:center;font-size:9.500px;line-height:10px;color:#555;transform:none">11</span><span class="t" style="left:750.4px;top:162.500px;width:20px;text-align:center;font-size:9.500px;line-height:10px;color:#555;transform:none">12</span><span class="t" style="left:788.2px;top:162.500px;width:20px;text-align:center;font-size:9.500px;line-height:10px;color:#555;transform:none">13</span><span class="t" style="left:826px;top:162.500px;width:20px;text-align:center;font-size:9.500px;line-height:10px;color:#555;transform:none">14</span><span class="t" style="left:863.8px;top:162.500px;width:20px;text-align:center;font-size:9.500px;line-height:10px;color:#555;transform:none">15</span><span class="t" style="left:901.6px;top:162.500px;width:20px;text-align:center;font-size:9.500px;line-height:10px;color:#555;transform:none">16</span><span class="t" style="left:939.4px;top:162.500px;width:20px;text-align:center;font-size:9.500px;line-height:10px;color:#555;transform:none">17</span><span class="t" style="left:977.2px;top:162.500px;width:20px;text-align:center;font-size:9.500px;line-height:10px;color:#555;transform:none">18</span><span class="t" style="left:1015px;top:162.500px;width:20px;text-align:center;font-size:9.500px;line-height:10px;color:#555;transform:none">19</span><span class="t" style="left:1052.8px;top:162.500px;width:20px;text-align:center;font-size:9.500px;line-height:10px;color:#555;transform:none">20</span><span class="t" style="left:1090.6px;top:162.500px;width:20px;text-align:center;font-size:9.500px;line-height:10px;color:#555;transform:none">21</span><span class="t" style="left:1128.4px;top:162.500px;width:20px;text-align:center;font-size:9.500px;line-height:10px;color:#555;transform:none">22</span><span class="t" style="left:1166.2px;top:162.500px;width:20px;text-align:center;font-size:9.500px;line-height:10px;color:#555;transform:none">23</span><span class="t" style="left:1204px;top:162.500px;width:20px;text-align:center;font-size:9.500px;line-height:10px;color:#555;transform:none">24</span><span class="t" style="left:1241.8px;top:162.500px;width:20px;text-align:center;font-size:9.500px;line-height:10px;color:#555;transform:none">25</span><span class="t" style="left:1317.4px;top:162.500px;width:20px;text-align:center;font-size:9.500px;line-height:10px;color:#555;transform:none">27</span><svg class="b" style="left:0px;top:0px;pointer-events:none" width="1600" height="180" viewBox="0 0 1600 180"><rect x="241.0" y="167.500" width="1.200" height="1.200" fill="#666"/><path d="M251.5 166v4.500" stroke="#666" stroke-width="1"/><rect x="260.0" y="167.500" width="1.200" height="1.200" fill="#666"/><rect x="279.0" y="167.500" width="1.200" height="1.200" fill="#666"/><path d="M289.5 166v4.500" stroke="#666" stroke-width="1"/><rect x="298.0" y="167.500" width="1.200" height="1.200" fill="#666"/><rect x="317.0" y="167.500" width="1.200" height="1.200" fill="#666"/><path d="M326.5 166v4.500" stroke="#666" stroke-width="1"/><rect x="336.0" y="167.500" width="1.200" height="1.200" fill="#666"/><rect x="355.0" y="167.500" width="1.200" height="1.200" fill="#666"/><path d="M364.5 166v4.500" stroke="#666" stroke-width="1"/><rect x="374.0" y="167.500" width="1.200" height="1.200" fill="#666"/><rect x="393.0" y="167.500" width="1.200" height="1.200" fill="#666"/><path d="M402.5 166v4.500" stroke="#666" stroke-width="1"/><rect x="411.0" y="167.500" width="1.200" height="1.200" fill="#666"/><rect x="430.0" y="167.500" width="1.200" height="1.200" fill="#666"/><path d="M440.5 166v4.500" stroke="#666" stroke-width="1"/><rect x="449.0" y="167.500" width="1.200" height="1.200" fill="#666"/><rect x="468.0" y="167.500" width="1.200" height="1.200" fill="#666"/><path d="M478.5 166v4.500" stroke="#666" stroke-width="1"/><rect x="487.0" y="167.500" width="1.200" height="1.200" fill="#666"/><rect x="506.0" y="167.500" width="1.200" height="1.200" fill="#666"/><path d="M515.5 166v4.500" stroke="#666" stroke-width="1"/><rect x="525.0" y="167.500" width="1.200" height="1.200" fill="#666"/><rect x="544.0" y="167.500" width="1.200" height="1.200" fill="#666"/><path d="M553.5 166v4.500" stroke="#666" stroke-width="1"/><rect x="563.0" y="167.500" width="1.200" height="1.200" fill="#666"/><rect x="582.0" y="167.500" width="1.200" height="1.200" fill="#666"/><path d="M591.5 166v4.500" stroke="#666" stroke-width="1"/><rect x="600.0" y="167.500" width="1.200" height="1.200" fill="#666"/><rect x="619.0" y="167.500" width="1.200" height="1.200" fill="#666"/><path d="M629.5 166v4.500" stroke="#666" stroke-width="1"/><rect x="638.0" y="167.500" width="1.200" height="1.200" fill="#666"/><rect x="657.0" y="167.500" width="1.200" height="1.200" fill="#666"/><path d="M667.5 166v4.500" stroke="#666" stroke-width="1"/><rect x="676.0" y="167.500" width="1.200" height="1.200" fill="#666"/><rect x="695.0" y="167.500" width="1.200" height="1.200" fill="#666"/><path d="M704.5 166v4.500" stroke="#666" stroke-width="1"/><rect x="714.0" y="167.500" width="1.200" height="1.200" fill="#666"/><rect x="733.0" y="167.500" width="1.200" height="1.200" fill="#666"/><path d="M742.5 166v4.500" stroke="#666" stroke-width="1"/><rect x="752.0" y="167.500" width="1.200" height="1.200" fill="#666"/><rect x="771.0" y="167.500" width="1.200" height="1.200" fill="#666"/><path d="M780.5 166v4.500" stroke="#666" stroke-width="1"/><rect x="789.0" y="167.500" width="1.200" height="1.200" fill="#666"/><rect x="808.0" y="167.500" width="1.200" height="1.200" fill="#666"/><path d="M818.5 166v4.500" stroke="#666" stroke-width="1"/><rect x="827.0" y="167.500" width="1.200" height="1.200" fill="#666"/><rect x="846.0" y="167.500" width="1.200" height="1.200" fill="#666"/><path d="M856.5 166v4.500" stroke="#666" stroke-width="1"/><rect x="865.0" y="167.500" width="1.200" height="1.200" fill="#666"/><rect x="884.0" y="167.500" width="1.200" height="1.200" fill="#666"/><path d="M893.5 166v4.500" stroke="#666" stroke-width="1"/><rect x="903.0" y="167.500" width="1.200" height="1.200" fill="#666"/><rect x="922.0" y="167.500" width="1.200" height="1.200" fill="#666"/><path d="M931.5 166v4.500" stroke="#666" stroke-width="1"/><rect x="941.0" y="167.500" width="1.200" height="1.200" fill="#666"/><rect x="960.0" y="167.500" width="1.200" height="1.200" fill="#666"/><path d="M969.5 166v4.500" stroke="#666" stroke-width="1"/><rect x="978.0" y="167.500" width="1.200" height="1.200" fill="#666"/><rect x="997.0" y="167.500" width="1.200" height="1.200" fill="#666"/><path d="M1007.5 166v4.500" stroke="#666" stroke-width="1"/><rect x="1016.0" y="167.500" width="1.200" height="1.200" fill="#666"/><rect x="1035.0" y="167.500" width="1.200" height="1.200" fill="#666"/><path d="M1045.5 166v4.500" stroke="#666" stroke-width="1"/><rect x="1054.0" y="167.500" width="1.200" height="1.200" fill="#666"/><rect x="1073.0" y="167.500" width="1.200" height="1.200" fill="#666"/><path d="M1082.5 166v4.500" stroke="#666" stroke-width="1"/><rect x="1092.0" y="167.500" width="1.200" height="1.200" fill="#666"/><rect x="1111.0" y="167.500" width="1.200" height="1.200" fill="#666"/><path d="M1120.5 166v4.500" stroke="#666" stroke-width="1"/><rect x="1130.0" y="167.500" width="1.200" height="1.200" fill="#666"/><rect x="1149.0" y="167.500" width="1.200" height="1.200" fill="#666"/><path d="M1158.5 166v4.500" stroke="#666" stroke-width="1"/><rect x="1167.0" y="167.500" width="1.200" height="1.200" fill="#666"/><rect x="1186.0" y="167.500" width="1.200" height="1.200" fill="#666"/><path d="M1196.5 166v4.500" stroke="#666" stroke-width="1"/><rect x="1205.0" y="167.500" width="1.200" height="1.200" fill="#666"/><rect x="1224.0" y="167.500" width="1.200" height="1.200" fill="#666"/><path d="M1234.5 166v4.500" stroke="#666" stroke-width="1"/><rect x="1243.0" y="167.500" width="1.200" height="1.200" fill="#666"/><rect x="1262.0" y="167.500" width="1.200" height="1.200" fill="#666"/><path d="M1271.5 166v4.500" stroke="#666" stroke-width="1"/><rect x="1281.0" y="167.500" width="1.200" height="1.200" fill="#666"/><rect x="1300.0" y="167.500" width="1.200" height="1.200" fill="#666"/><path d="M1309.5 166v4.500" stroke="#666" stroke-width="1"/><rect x="1319.0" y="167.500" width="1.200" height="1.200" fill="#666"/><rect x="1338.0" y="167.500" width="1.200" height="1.200" fill="#666"/><path d="M1347.5 166v4.500" stroke="#666" stroke-width="1"/><rect x="1356.0" y="167.500" width="1.200" height="1.200" fill="#666"/></svg><svg class="b" style="left:303px;top:158.5px;" width="9" height="22" viewBox="0 0 9 22"><path d="M.5.5h8v3.400l-4 4.200-4-4.200z" fill="#fff" stroke="#8a8a8a"/><path d="M.5 16.600v-3.800l4-4.200 4 4.200v3.800z" fill="#fff" stroke="#8a8a8a"/><rect x=".5" y="16.600" width="8" height="4.400" fill="#fff" stroke="#8a8a8a"/></svg><svg class="b" style="left:1282.5px;top:166px;" width="9" height="9" viewBox="0 0 9 9"><path d="M.5 8.500v-3.800l4-4.200 4 4.200v3.800z" fill="#fff" stroke="#8a8a8a"/></svg><div class="b" style="left:298px;top:236px;width:1012px;height:610px;border:1px solid #000;box-sizing:border-box"></div><div class="b" style="left:798px;top:236px;width:1px;height:610px;background:#000"></div><div class="b" style="left:298px;top:700px;width:1012px;height:1px;background:#000"></div><svg class="b" style="left:283px;top:221px;" width="15" height="15" viewBox="0 0 15 15"><rect x=".5" y=".5" width="14" height="14" fill="#fff" stroke="#9a9a9a"/><path d="M7.500 2.500v10M2.500 7.500h10M6 4.200l1.500-1.700 1.500 1.700M6 10.800l1.500 1.700 1.500-1.700M4.200 6l-1.700 1.500 1.700 1.500M10.800 6l1.700 1.500-1.700 1.500" fill="none" stroke="#555" stroke-width="1"/></svg><div class="d" style="top:216px;color:#000;font-weight:700;left:308px;letter-spacing:0;">Оқушының аты:_______________________________</div><div class="d" style="top:216px;color:#000;font-weight:700;left:901.5px;letter-spacing:0;">Оқушының аты:_______________________________</div><div class="d" style="top:240px;color:#c00000;font-weight:700;left:299.5px;width:499.5px;text-align:center;">Дұрыс жауап нұсқасын белгіле.</div><div class="d" style="top:260px;color:#002060;font-weight:700;left:306.3px;">1. Жарақаттан сақтанудың дұрыс жолы қайсы?</div><div class="d" style="top:278.39px;color:#002060;left:306.3px;">A) Жүгірер алдында жылыну жаттығуын жасау</div><div class="d" style="top:296.78px;color:#002060;left:306.3px;">B) Ауыр затты тез көтеру</div><div class="d" style="top:315.17px;color:#002060;left:306.3px;">C) Басқа оқушыны итеру</div><div class="d" style="top:333.56px;color:#002060;font-weight:700;left:306.3px;">2. Қайсысы жарақат алу себептеріне жатады?</div><div class="d" style="top:351.95px;color:#002060;left:306.3px;">A) Қауіпсіздік ережесін сақтау</div><div class="d" style="top:370.34px;color:#002060;left:306.3px;">B) Нұсқаушының кеңесін тыңдамау</div><div class="d" style="top:388.73px;color:#002060;left:306.3px;">C) Спортпен мүлде айналыспау</div><div class="d" style="top:407.12px;color:#002060;font-weight:700;left:306.3px;">3. Жарақат алу қандай жағдайларда болады?</div><div class="d" style="top:425.51px;color:#002060;left:306.3px;">A) Дұрыс тамақтанғанда</div><div class="d" style="top:443.9px;color:#002060;left:306.3px;">B) Құлап қалған кезде</div><div class="d" style="top:462.29px;color:#002060;left:306.3px;">C) Демалғанда</div><div class="d" style="top:480.68px;color:#002060;font-weight:700;left:306.3px;">4. Соғылған жерге не жасауға болады?</div><div class="d" style="top:499.07px;color:#002060;left:306.3px;">A) Жылыту</div><div class="d" style="top:517.46px;color:#002060;left:306.3px;">B) Мұз басу</div><div class="d" style="top:535.85px;color:#002060;left:306.3px;">C) Сылау</div><div class="d" style="top:554.24px;color:#002060;font-weight:700;left:306.3px;">5. Буын шыққанда не істеу керек?</div><div class="d" style="top:572.63px;color:#002060;left:306.3px;">A) Дәкемен тқатты тартып орайды</div><div class="d" style="top:591.02px;color:#002060;left:306.3px;">B) Буынды өз бетінше түзету</div><div class="d" style="top:609.41px;color:#002060;left:306.3px;">C) Йод құю</div><div class="d" style="top:627.8px;color:#002060;font-weight:700;left:306.3px;">6. Ашық жарақат алған жерге алдымен не жағылады?</div><div class="d" style="top:646.19px;color:#002060;left:306.3px;">A) Салқын су</div><div class="d" style="top:664.58px;color:#002060;left:306.3px;">B) Йод</div><div class="d" style="top:682.97px;color:#002060;left:306.3px;">C) Кофе</div><div class="d" style="top:238px;color:#c00000;font-weight:700;left:804px;width:505.5px;text-align:center;">Дұрыс жауап нұсқасын белгіле.</div><div class="d" style="top:257px;color:#002060;font-weight:700;left:826.5px;">1. Жарақаттан сақтанудың дұрыс жолы қайсы?</div><div class="d" style="top:275.39px;color:#002060;left:826.5px;">A) Жүгірер алдында жылыну жаттығуын жасау</div><div class="d" style="top:293.78px;color:#002060;left:826.5px;">B) Ауыр затты тез көтеру</div><div class="d" style="top:312.17px;color:#002060;left:826.5px;">C) Басқа оқушыны итеру</div><div class="d" style="top:330.56px;color:#002060;font-weight:700;left:826.5px;">2. Қайсысы жарақат алу себептеріне жатады?</div><div class="d" style="top:348.95px;color:#002060;left:826.5px;">A) Қауіпсіздік ережесін сақтау</div><div class="d" style="top:367.34px;color:#002060;left:826.5px;">B) Нұсқаушының кеңесін тыңдамау</div><div class="d" style="top:385.73px;color:#002060;left:826.5px;">C) Спортпен мүлде айналыспау</div><div class="d" style="top:404.12px;color:#002060;font-weight:700;left:826.5px;">3. Жарақат алу қандай жағдайларда болады?</div><div class="d" style="top:422.51px;color:#002060;left:826.5px;">A) Дұрыс тамақтанғанда</div><div class="d" style="top:440.9px;color:#002060;left:826.5px;">B) Құлап қалған кезде</div><div class="d" style="top:459.29px;color:#002060;left:826.5px;">C) Демалғанда</div><div class="d" style="top:477.68px;color:#002060;font-weight:700;left:826.5px;">4. Соғылған жерге не жасауға болады?</div><div class="d" style="top:496.07px;color:#002060;left:826.5px;">A) Жылыту</div><div class="d" style="top:514.46px;color:#002060;left:826.5px;">B) Мұз басу</div><div class="d" style="top:532.85px;color:#002060;left:826.5px;">C) Сылау</div><div class="d" style="top:551.24px;color:#002060;font-weight:700;left:826.5px;">5. Буын шыққанда не істеу керек?</div><div class="d" style="top:569.63px;color:#002060;left:826.5px;">A) Дәкемен тқатты тартып орайды</div><div class="d" style="top:588.02px;color:#002060;left:826.5px;">B) Буынды өз бетінше түзету</div><div class="d" style="top:606.41px;color:#002060;left:826.5px;">C) Йод құю</div><div class="d" style="top:624.8px;color:#002060;font-weight:700;left:826.5px;">6. Ашық жарақат алған жерге алдымен не жағылады?</div><div class="d" style="top:643.19px;color:#002060;left:826.5px;">A) Салқын су</div><div class="d" style="top:661.58px;color:#002060;left:826.5px;">B) Йод</div><div class="d" style="top:679.97px;color:#002060;left:826.5px;">C) Кофе</div><svg class="b" style="left:673px;top:278px;" width="91" height="71" viewBox="0 0 91 71"><defs><radialGradient id="gasp" cx="42%" cy="62%" r="62%"><stop offset="0" stop-color="#ffffff"/><stop offset=".62" stop-color="#f4f5f3"/><stop offset=".85" stop-color="#d5dad2"/><stop offset="1" stop-color="#aab4a6"/></radialGradient><radialGradient id="gala" gradientUnits="userSpaceOnUse" cx="59" cy="22" r="30"><stop offset="0" stop-color="#c2f616"/><stop offset=".35" stop-color="#7fd614"/><stop offset=".7" stop-color="#3aa914"/><stop offset="1" stop-color="#1c7d10"/></radialGradient><radialGradient id="gafl" cx="42%" cy="62%" r="60%"><stop offset="0" stop-color="#f08c08"/><stop offset=".22" stop-color="#f9b40e"/><stop offset=".45" stop-color="#ffe111"/><stop offset="1" stop-color="#fff02a"/></radialGradient><clipPath id="gacl"><ellipse cx="47.500" cy="35" rx="26.500" ry="28.200"/></clipPath><filter id="gab1" x="-20%" y="-50%" width="140%" height="200%"><feGaussianBlur stdDeviation="2.200"/></filter><filter id="gab2" x="-20%" y="-20%" width="140%" height="140%"><feGaussianBlur stdDeviation=".45"/></filter><filter id="gab3" x="-30%" y="-30%" width="160%" height="160%"><feGaussianBlur stdDeviation="4"/></filter><clipPath id="gaall"><rect x="0" y="0" width="91" height="71"/></clipPath></defs><g clip-path="url(#gaall)"><rect x="58" y="44" width="40" height="34" fill="#c9ecd0" filter="url(#gab3)" opacity=".9"/><ellipse cx="38" cy="63.500" rx="40" ry="8" fill="#4fb02a" opacity=".8" filter="url(#gab1)"/><ellipse cx="36" cy="65" rx="28" ry="3.500" fill="#2a9414" opacity=".8" filter="url(#gab1)"/><g filter="url(#gab2)"><circle cx="67.500" cy="12.500" r="9" fill="#ffe414"/><ellipse cx="67.5" cy="5.625" rx="2.5" ry="6.25" fill="url(#gafl)" transform="rotate(0 67.5 12.5)"/><ellipse cx="67.5" cy="5.625" rx="2.5" ry="6.25" fill="url(#gafl)" transform="rotate(18 67.5 12.5)"/><ellipse cx="67.5" cy="5.625" rx="2.5" ry="6.25" fill="url(#gafl)" transform="rotate(36 67.5 12.5)"/><ellipse cx="67.5" cy="5.625" rx="2.5" ry="6.25" fill="url(#gafl)" transform="rotate(54 67.5 12.5)"/><ellipse cx="67.5" cy="5.625" rx="2.5" ry="6.25" fill="url(#gafl)" transform="rotate(72 67.5 12.5)"/><ellipse cx="67.5" cy="5.625" rx="2.5" ry="6.25" fill="url(#gafl)" transform="rotate(90 67.5 12.5)"/><ellipse cx="67.5" cy="5.625" rx="2.5" ry="6.25" fill="url(#gafl)" transform="rotate(108 67.5 12.5)"/><ellipse cx="67.5" cy="5.625" rx="2.5" ry="6.25" fill="url(#gafl)" transform="rotate(126 67.5 12.5)"/><ellipse cx="67.5" cy="5.625" rx="2.5" ry="6.25" fill="url(#gafl)" transform="rotate(144 67.5 12.5)"/><ellipse cx="67.5" cy="5.625" rx="2.5" ry="6.25" fill="url(#gafl)" transform="rotate(162 67.5 12.5)"/><ellipse cx="67.5" cy="5.625" rx="2.5" ry="6.25" fill="url(#gafl)" transform="rotate(180 67.5 12.5)"/><ellipse cx="67.5" cy="5.625" rx="2.5" ry="6.25" fill="url(#gafl)" transform="rotate(198 67.5 12.5)"/><ellipse cx="67.5" cy="5.625" rx="2.5" ry="6.25" fill="url(#gafl)" transform="rotate(216 67.5 12.5)"/><ellipse cx="67.5" cy="5.625" rx="2.5" ry="6.25" fill="url(#gafl)" transform="rotate(234 67.5 12.5)"/><ellipse cx="67.5" cy="5.625" rx="2.5" ry="6.25" fill="url(#gafl)" transform="rotate(252 67.5 12.5)"/><ellipse cx="67.5" cy="5.625" rx="2.5" ry="6.25" fill="url(#gafl)" transform="rotate(270 67.5 12.5)"/><ellipse cx="67.5" cy="5.625" rx="2.5" ry="6.25" fill="url(#gafl)" transform="rotate(288 67.5 12.5)"/><ellipse cx="67.5" cy="5.625" rx="2.5" ry="6.25" fill="url(#gafl)" transform="rotate(306 67.5 12.5)"/><ellipse cx="67.5" cy="5.625" rx="2.5" ry="6.25" fill="url(#gafl)" transform="rotate(324 67.5 12.5)"/><ellipse cx="67.5" cy="5.625" rx="2.5" ry="6.25" fill="url(#gafl)" transform="rotate(342 67.5 12.5)"/><circle cx="66" cy="14.375" r="3" fill="#f5a20c"/><circle cx="67.5" cy="12.5" r="6.25" fill="#f8c20f" opacity=".0"/><circle cx="75.500" cy="28" r="7" fill="#ffe414"/><ellipse cx="75.5" cy="22.5" rx="2" ry="5" fill="url(#gafl)" transform="rotate(0 75.5 28)"/><ellipse cx="75.5" cy="22.5" rx="2" ry="5" fill="url(#gafl)" transform="rotate(20 75.5 28)"/><ellipse cx="75.5" cy="22.5" rx="2" ry="5" fill="url(#gafl)" transform="rotate(40 75.5 28)"/><ellipse cx="75.5" cy="22.5" rx="2" ry="5" fill="url(#gafl)" transform="rotate(60 75.5 28)"/><ellipse cx="75.5" cy="22.5" rx="2" ry="5" fill="url(#gafl)" transform="rotate(80 75.5 28)"/><ellipse cx="75.5" cy="22.5" rx="2" ry="5" fill="url(#gafl)" transform="rotate(100 75.5 28)"/><ellipse cx="75.5" cy="22.5" rx="2" ry="5" fill="url(#gafl)" transform="rotate(120 75.5 28)"/><ellipse cx="75.5" cy="22.5" rx="2" ry="5" fill="url(#gafl)" transform="rotate(140 75.5 28)"/><ellipse cx="75.5" cy="22.5" rx="2" ry="5" fill="url(#gafl)" transform="rotate(160 75.5 28)"/><ellipse cx="75.5" cy="22.5" rx="2" ry="5" fill="url(#gafl)" transform="rotate(180 75.5 28)"/><ellipse cx="75.5" cy="22.5" rx="2" ry="5" fill="url(#gafl)" transform="rotate(200 75.5 28)"/><ellipse cx="75.5" cy="22.5" rx="2" ry="5" fill="url(#gafl)" transform="rotate(220 75.5 28)"/><ellipse cx="75.5" cy="22.5" rx="2" ry="5" fill="url(#gafl)" transform="rotate(240 75.5 28)"/><ellipse cx="75.5" cy="22.5" rx="2" ry="5" fill="url(#gafl)" transform="rotate(260 75.5 28)"/><ellipse cx="75.5" cy="22.5" rx="2" ry="5" fill="url(#gafl)" transform="rotate(280 75.5 28)"/><ellipse cx="75.5" cy="22.5" rx="2" ry="5" fill="url(#gafl)" transform="rotate(300 75.5 28)"/><ellipse cx="75.5" cy="22.5" rx="2" ry="5" fill="url(#gafl)" transform="rotate(320 75.5 28)"/><ellipse cx="75.5" cy="22.5" rx="2" ry="5" fill="url(#gafl)" transform="rotate(340 75.5 28)"/><circle cx="74.3" cy="29.5" r="2.4" fill="#f5a20c"/><circle cx="75.5" cy="28" r="5" fill="#f8c20f" opacity=".0"/></g><path d="M87 6c-1 10-4 18-6 24-2 8-6 16-9 22" fill="none" stroke="#58a82a" stroke-width=".5"/><ellipse cx="86.5" cy="5" rx="2.300" ry="1" fill="#58ad2c" transform="rotate(-60 86.5 5)"/><ellipse cx="84.5" cy="9" rx="2.300" ry="1" fill="#58ad2c" transform="rotate(20 84.5 9)"/><ellipse cx="87" cy="9.5" rx="2.300" ry="1" fill="#58ad2c" transform="rotate(-50 87 9.5)"/><ellipse cx="82.5" cy="13.5" rx="2.300" ry="1" fill="#58ad2c" transform="rotate(20 82.5 13.5)"/><ellipse cx="85.5" cy="14" rx="2.300" ry="1" fill="#58ad2c" transform="rotate(-45 85.5 14)"/><ellipse cx="81" cy="18.5" rx="2.300" ry="1" fill="#58ad2c" transform="rotate(25 81 18.5)"/><ellipse cx="83.5" cy="19" rx="2.300" ry="1" fill="#58ad2c" transform="rotate(-40 83.5 19)"/><ellipse cx="86.5" cy="29" rx="2.300" ry="1" fill="#58ad2c" transform="rotate(-55 86.5 29)"/><ellipse cx="84" cy="33" rx="2.300" ry="1" fill="#58ad2c" transform="rotate(15 84 33)"/><ellipse cx="86" cy="34" rx="2.300" ry="1" fill="#58ad2c" transform="rotate(-40 86 34)"/><ellipse cx="82.5" cy="38" rx="2.300" ry="1" fill="#58ad2c" transform="rotate(-10 82.5 38)"/><ellipse cx="80.5" cy="43" rx="2.300" ry="1" fill="#58ad2c" transform="rotate(-5 80.5 43)"/><ellipse cx="76" cy="49" rx="2.300" ry="1" fill="#58ad2c" transform="rotate(25 76 49)"/><ellipse cx="72" cy="54" rx="2.300" ry="1" fill="#58ad2c" transform="rotate(35 72 54)"/><ellipse cx="53.500" cy="8.500" rx="1.800" ry=".9" fill="#55ad27" transform="rotate(50 53.500 8.500)"/><ellipse cx="47.500" cy="35" rx="26.500" ry="28.200" fill="url(#gasp)"/><g clip-path="url(#gacl)" filter="url(#gab2)"><path d="M44.500 15c1.500-2 4-2.500 6-2 2-1.500 4-2.500 6-2.500 3-1.200 6-.5 9 .5 3.500 2 6.500 5 8 9 1.500 4 1.200 8 .6 12l-2.400 4.500c-1-2.500-2.600-3.800-4.500-3.500-1.500 1-2.500 3-3.500 5.500-1 3-2 6-2.200 9l-1.500 5c-1 3-2.500 5.500-3.500 6.200-1.500-1.500-2-4.500-2.600-7.500-.6-2.500-1.500-4-3-4.500-2 .8-4 .6-5.500-.6-1.800-1.600-2.400-4-2-6.500.5-2.500 2-4.500 3.500-6 .8-1 .8-2-.4-2.500-1.500-.6-2.600.4-3.200 1.500-1-1-1.500-2.600-1.200-4l1.500 1c.5-1.500-.2-3-1.200-4 .5-1.800 1.800-2.600 3-3 .5-2 .2-4-1.300-5.500z" fill="url(#gala)"/><path d="M45 33.500c2-1 4.500-1.300 6.500-.8l3-.4c-1.500 1.200-3.500 1.800-5.500 1.800-1.500.6-3 .6-4-.6z M52 28.500c1.200-.6 2.600-.5 3.600.2-1 .8-2.600.8-3.600-.2z M47 17c.5 2 .6 4 .2 6-.7-1.800-.9-4-.2-6z" fill="#f4f6f2"/><path d="M64.500 46c.6 1.800.5 3.600-.2 5.200-.7-1.600-.6-3.600.2-5.200z" fill="#2a8e14"/><path d="M31.500 12c-3 2-5.500 5-7 8.500-.6 2.500-.2 5 1.500 7 1 1.500 2 2.500 3 2.600.4-2.500 1-5 2-7 .8-3 1.200-6 .9-9l-.4-2.100z" fill="#3c9d18"/><path d="M33 23c1-1 2.500-1.300 3.600-.6-.6 1.300-2.300 2-3.600.6z" fill="#49ad1d"/><path d="M21.500 32.500c1.500 1 3.500 2.500 5 5 .8 2 .2 3.600-1.200 4.500-1 1.800-1.500 3.800-1.800 5.500-1.500-2.500-2.600-5.500-2.900-8.500z" fill="#1f7a10"/><path d="M29 55.500c3-.6 7-.4 11 .5l.5 6.500c-3-.5-6.500-2-9-4.200z" fill="#1b6a0e"/></g><path d="M12.500 48c.5 4 2.500 7 6.500 8.200 3 .8 6 .6 8.500-.2" fill="none" stroke="#4aa520" stroke-width="1.700" stroke-linecap="round"/><ellipse cx="7.5" cy="35" rx="2.300" ry="1" fill="#62b82c" transform="rotate(60 7.5 35)"/><ellipse cx="8" cy="38.5" rx="2.300" ry="1" fill="#62b82c" transform="rotate(30 8 38.5)"/><ellipse cx="10" cy="41" rx="2.300" ry="1" fill="#62b82c" transform="rotate(60 10 41)"/><ellipse cx="9.5" cy="44" rx="2.300" ry="1" fill="#62b82c" transform="rotate(20 9.5 44)"/><ellipse cx="12" cy="46" rx="2.300" ry="1" fill="#62b82c" transform="rotate(60 12 46)"/><ellipse cx="24" cy="49" rx="2.300" ry="1" fill="#62b82c" transform="rotate(-50 24 49)"/><ellipse cx="27" cy="53" rx="2.300" ry="1" fill="#62b82c" transform="rotate(-50 27 53)"/><ellipse cx="26" cy="57" rx="2.300" ry="1" fill="#62b82c" transform="rotate(-40 26 57)"/><ellipse cx="29" cy="59.5" rx="2.300" ry="1" fill="#62b82c" transform="rotate(-45 29 59.5)"/><ellipse cx="23" cy="62" rx="2.300" ry="1" fill="#62b82c" transform="rotate(-30 23 62)"/><ellipse cx="46" cy="64.500" rx="26" ry="3" fill="#3fa61a" filter="url(#gab1)" opacity=".9"/></g></svg><svg class="b" style="left:1188px;top:275px;" width="91" height="71" viewBox="0 0 91 71"><defs><radialGradient id="gbsp" cx="42%" cy="62%" r="62%"><stop offset="0" stop-color="#ffffff"/><stop offset=".62" stop-color="#f4f5f3"/><stop offset=".85" stop-color="#d5dad2"/><stop offset="1" stop-color="#aab4a6"/></radialGradient><radialGradient id="gbla" gradientUnits="userSpaceOnUse" cx="59" cy="22" r="30"><stop offset="0" stop-color="#c2f616"/><stop offset=".35" stop-color="#7fd614"/><stop offset=".7" stop-color="#3aa914"/><stop offset="1" stop-color="#1c7d10"/></radialGradient><radialGradient id="gbfl" cx="42%" cy="62%" r="60%"><stop offset="0" stop-color="#f08c08"/><stop offset=".22" stop-color="#f9b40e"/><stop offset=".45" stop-color="#ffe111"/><stop offset="1" stop-color="#fff02a"/></radialGradient><clipPath id="gbcl"><ellipse cx="47.500" cy="35" rx="26.500" ry="28.200"/></clipPath><filter id="gbb1" x="-20%" y="-50%" width="140%" height="200%"><feGaussianBlur stdDeviation="2.200"/></filter><filter id="gbb2" x="-20%" y="-20%" width="140%" height="140%"><feGaussianBlur stdDeviation=".45"/></filter><filter id="gbb3" x="-30%" y="-30%" width="160%" height="160%"><feGaussianBlur stdDeviation="4"/></filter><clipPath id="gball"><rect x="0" y="0" width="91" height="71"/></clipPath></defs><g clip-path="url(#gball)"><rect x="58" y="44" width="40" height="34" fill="#c9ecd0" filter="url(#gbb3)" opacity=".9"/><ellipse cx="38" cy="63.500" rx="40" ry="8" fill="#4fb02a" opacity=".8" filter="url(#gbb1)"/><ellipse cx="36" cy="65" rx="28" ry="3.500" fill="#2a9414" opacity=".8" filter="url(#gbb1)"/><g filter="url(#gbb2)"><circle cx="67.500" cy="12.500" r="9" fill="#ffe414"/><ellipse cx="67.5" cy="5.625" rx="2.5" ry="6.25" fill="url(#gbfl)" transform="rotate(0 67.5 12.5)"/><ellipse cx="67.5" cy="5.625" rx="2.5" ry="6.25" fill="url(#gbfl)" transform="rotate(18 67.5 12.5)"/><ellipse cx="67.5" cy="5.625" rx="2.5" ry="6.25" fill="url(#gbfl)" transform="rotate(36 67.5 12.5)"/><ellipse cx="67.5" cy="5.625" rx="2.5" ry="6.25" fill="url(#gbfl)" transform="rotate(54 67.5 12.5)"/><ellipse cx="67.5" cy="5.625" rx="2.5" ry="6.25" fill="url(#gbfl)" transform="rotate(72 67.5 12.5)"/><ellipse cx="67.5" cy="5.625" rx="2.5" ry="6.25" fill="url(#gbfl)" transform="rotate(90 67.5 12.5)"/><ellipse cx="67.5" cy="5.625" rx="2.5" ry="6.25" fill="url(#gbfl)" transform="rotate(108 67.5 12.5)"/><ellipse cx="67.5" cy="5.625" rx="2.5" ry="6.25" fill="url(#gbfl)" transform="rotate(126 67.5 12.5)"/><ellipse cx="67.5" cy="5.625" rx="2.5" ry="6.25" fill="url(#gbfl)" transform="rotate(144 67.5 12.5)"/><ellipse cx="67.5" cy="5.625" rx="2.5" ry="6.25" fill="url(#gbfl)" transform="rotate(162 67.5 12.5)"/><ellipse cx="67.5" cy="5.625" rx="2.5" ry="6.25" fill="url(#gbfl)" transform="rotate(180 67.5 12.5)"/><ellipse cx="67.5" cy="5.625" rx="2.5" ry="6.25" fill="url(#gbfl)" transform="rotate(198 67.5 12.5)"/><ellipse cx="67.5" cy="5.625" rx="2.5" ry="6.25" fill="url(#gbfl)" transform="rotate(216 67.5 12.5)"/><ellipse cx="67.5" cy="5.625" rx="2.5" ry="6.25" fill="url(#gbfl)" transform="rotate(234 67.5 12.5)"/><ellipse cx="67.5" cy="5.625" rx="2.5" ry="6.25" fill="url(#gbfl)" transform="rotate(252 67.5 12.5)"/><ellipse cx="67.5" cy="5.625" rx="2.5" ry="6.25" fill="url(#gbfl)" transform="rotate(270 67.5 12.5)"/><ellipse cx="67.5" cy="5.625" rx="2.5" ry="6.25" fill="url(#gbfl)" transform="rotate(288 67.5 12.5)"/><ellipse cx="67.5" cy="5.625" rx="2.5" ry="6.25" fill="url(#gbfl)" transform="rotate(306 67.5 12.5)"/><ellipse cx="67.5" cy="5.625" rx="2.5" ry="6.25" fill="url(#gbfl)" transform="rotate(324 67.5 12.5)"/><ellipse cx="67.5" cy="5.625" rx="2.5" ry="6.25" fill="url(#gbfl)" transform="rotate(342 67.5 12.5)"/><circle cx="66" cy="14.375" r="3" fill="#f5a20c"/><circle cx="67.5" cy="12.5" r="6.25" fill="#f8c20f" opacity=".0"/><circle cx="75.500" cy="28" r="7" fill="#ffe414"/><ellipse cx="75.5" cy="22.5" rx="2" ry="5" fill="url(#gbfl)" transform="rotate(0 75.5 28)"/><ellipse cx="75.5" cy="22.5" rx="2" ry="5" fill="url(#gbfl)" transform="rotate(20 75.5 28)"/><ellipse cx="75.5" cy="22.5" rx="2" ry="5" fill="url(#gbfl)" transform="rotate(40 75.5 28)"/><ellipse cx="75.5" cy="22.5" rx="2" ry="5" fill="url(#gbfl)" transform="rotate(60 75.5 28)"/><ellipse cx="75.5" cy="22.5" rx="2" ry="5" fill="url(#gbfl)" transform="rotate(80 75.5 28)"/><ellipse cx="75.5" cy="22.5" rx="2" ry="5" fill="url(#gbfl)" transform="rotate(100 75.5 28)"/><ellipse cx="75.5" cy="22.5" rx="2" ry="5" fill="url(#gbfl)" transform="rotate(120 75.5 28)"/><ellipse cx="75.5" cy="22.5" rx="2" ry="5" fill="url(#gbfl)" transform="rotate(140 75.5 28)"/><ellipse cx="75.5" cy="22.5" rx="2" ry="5" fill="url(#gbfl)" transform="rotate(160 75.5 28)"/><ellipse cx="75.5" cy="22.5" rx="2" ry="5" fill="url(#gbfl)" transform="rotate(180 75.5 28)"/><ellipse cx="75.5" cy="22.5" rx="2" ry="5" fill="url(#gbfl)" transform="rotate(200 75.5 28)"/><ellipse cx="75.5" cy="22.5" rx="2" ry="5" fill="url(#gbfl)" transform="rotate(220 75.5 28)"/><ellipse cx="75.5" cy="22.5" rx="2" ry="5" fill="url(#gbfl)" transform="rotate(240 75.5 28)"/><ellipse cx="75.5" cy="22.5" rx="2" ry="5" fill="url(#gbfl)" transform="rotate(260 75.5 28)"/><ellipse cx="75.5" cy="22.5" rx="2" ry="5" fill="url(#gbfl)" transform="rotate(280 75.5 28)"/><ellipse cx="75.5" cy="22.5" rx="2" ry="5" fill="url(#gbfl)" transform="rotate(300 75.5 28)"/><ellipse cx="75.5" cy="22.5" rx="2" ry="5" fill="url(#gbfl)" transform="rotate(320 75.5 28)"/><ellipse cx="75.5" cy="22.5" rx="2" ry="5" fill="url(#gbfl)" transform="rotate(340 75.5 28)"/><circle cx="74.3" cy="29.5" r="2.4" fill="#f5a20c"/><circle cx="75.5" cy="28" r="5" fill="#f8c20f" opacity=".0"/></g><path d="M87 6c-1 10-4 18-6 24-2 8-6 16-9 22" fill="none" stroke="#58a82a" stroke-width=".5"/><ellipse cx="86.5" cy="5" rx="2.300" ry="1" fill="#58ad2c" transform="rotate(-60 86.5 5)"/><ellipse cx="84.5" cy="9" rx="2.300" ry="1" fill="#58ad2c" transform="rotate(20 84.5 9)"/><ellipse cx="87" cy="9.5" rx="2.300" ry="1" fill="#58ad2c" transform="rotate(-50 87 9.5)"/><ellipse cx="82.5" cy="13.5" rx="2.300" ry="1" fill="#58ad2c" transform="rotate(20 82.5 13.5)"/><ellipse cx="85.5" cy="14" rx="2.300" ry="1" fill="#58ad2c" transform="rotate(-45 85.5 14)"/><ellipse cx="81" cy="18.5" rx="2.300" ry="1" fill="#58ad2c" transform="rotate(25 81 18.5)"/><ellipse cx="83.5" cy="19" rx="2.300" ry="1" fill="#58ad2c" transform="rotate(-40 83.5 19)"/><ellipse cx="86.5" cy="29" rx="2.300" ry="1" fill="#58ad2c" transform="rotate(-55 86.5 29)"/><ellipse cx="84" cy="33" rx="2.300" ry="1" fill="#58ad2c" transform="rotate(15 84 33)"/><ellipse cx="86" cy="34" rx="2.300" ry="1" fill="#58ad2c" transform="rotate(-40 86 34)"/><ellipse cx="82.5" cy="38" rx="2.300" ry="1" fill="#58ad2c" transform="rotate(-10 82.5 38)"/><ellipse cx="80.5" cy="43" rx="2.300" ry="1" fill="#58ad2c" transform="rotate(-5 80.5 43)"/><ellipse cx="76" cy="49" rx="2.300" ry="1" fill="#58ad2c" transform="rotate(25 76 49)"/><ellipse cx="72" cy="54" rx="2.300" ry="1" fill="#58ad2c" transform="rotate(35 72 54)"/><ellipse cx="53.500" cy="8.500" rx="1.800" ry=".9" fill="#55ad27" transform="rotate(50 53.500 8.500)"/><ellipse cx="47.500" cy="35" rx="26.500" ry="28.200" fill="url(#gbsp)"/><g clip-path="url(#gbcl)" filter="url(#gbb2)"><path d="M44.500 15c1.500-2 4-2.500 6-2 2-1.500 4-2.500 6-2.500 3-1.200 6-.5 9 .5 3.500 2 6.500 5 8 9 1.500 4 1.200 8 .6 12l-2.400 4.500c-1-2.500-2.600-3.800-4.500-3.500-1.500 1-2.500 3-3.500 5.500-1 3-2 6-2.200 9l-1.500 5c-1 3-2.500 5.500-3.500 6.200-1.500-1.500-2-4.500-2.600-7.500-.6-2.500-1.500-4-3-4.500-2 .8-4 .6-5.500-.6-1.800-1.600-2.400-4-2-6.500.5-2.500 2-4.500 3.500-6 .8-1 .8-2-.4-2.500-1.500-.6-2.600.4-3.200 1.500-1-1-1.500-2.600-1.200-4l1.500 1c.5-1.500-.2-3-1.200-4 .5-1.800 1.800-2.600 3-3 .5-2 .2-4-1.300-5.500z" fill="url(#gbla)"/><path d="M45 33.500c2-1 4.500-1.300 6.500-.8l3-.4c-1.500 1.200-3.500 1.800-5.500 1.800-1.500.6-3 .6-4-.6z M52 28.500c1.200-.6 2.600-.5 3.600.2-1 .8-2.600.8-3.600-.2z M47 17c.5 2 .6 4 .2 6-.7-1.800-.9-4-.2-6z" fill="#f4f6f2"/><path d="M64.500 46c.6 1.800.5 3.600-.2 5.200-.7-1.600-.6-3.600.2-5.200z" fill="#2a8e14"/><path d="M31.500 12c-3 2-5.500 5-7 8.500-.6 2.500-.2 5 1.500 7 1 1.500 2 2.500 3 2.600.4-2.500 1-5 2-7 .8-3 1.200-6 .9-9l-.4-2.100z" fill="#3c9d18"/><path d="M33 23c1-1 2.500-1.300 3.600-.6-.6 1.300-2.300 2-3.600.6z" fill="#49ad1d"/><path d="M21.500 32.500c1.500 1 3.500 2.500 5 5 .8 2 .2 3.600-1.200 4.500-1 1.800-1.500 3.800-1.800 5.500-1.500-2.500-2.600-5.500-2.900-8.500z" fill="#1f7a10"/><path d="M29 55.500c3-.6 7-.4 11 .5l.5 6.500c-3-.5-6.500-2-9-4.200z" fill="#1b6a0e"/></g><path d="M12.500 48c.5 4 2.500 7 6.500 8.200 3 .8 6 .6 8.500-.2" fill="none" stroke="#4aa520" stroke-width="1.700" stroke-linecap="round"/><ellipse cx="7.5" cy="35" rx="2.300" ry="1" fill="#62b82c" transform="rotate(60 7.5 35)"/><ellipse cx="8" cy="38.5" rx="2.300" ry="1" fill="#62b82c" transform="rotate(30 8 38.5)"/><ellipse cx="10" cy="41" rx="2.300" ry="1" fill="#62b82c" transform="rotate(60 10 41)"/><ellipse cx="9.5" cy="44" rx="2.300" ry="1" fill="#62b82c" transform="rotate(20 9.5 44)"/><ellipse cx="12" cy="46" rx="2.300" ry="1" fill="#62b82c" transform="rotate(60 12 46)"/><ellipse cx="24" cy="49" rx="2.300" ry="1" fill="#62b82c" transform="rotate(-50 24 49)"/><ellipse cx="27" cy="53" rx="2.300" ry="1" fill="#62b82c" transform="rotate(-50 27 53)"/><ellipse cx="26" cy="57" rx="2.300" ry="1" fill="#62b82c" transform="rotate(-40 26 57)"/><ellipse cx="29" cy="59.5" rx="2.300" ry="1" fill="#62b82c" transform="rotate(-45 29 59.5)"/><ellipse cx="23" cy="62" rx="2.300" ry="1" fill="#62b82c" transform="rotate(-30 23 62)"/><ellipse cx="46" cy="64.500" rx="26" ry="3" fill="#3fa61a" filter="url(#gbb1)" opacity=".9"/></g></svg><div class="d" style="top:702.8px;color:#c00000;font-weight:700;left:299.5px;width:500px;text-align:center;">Суретті боя.</div><div class="d" style="top:702.8px;color:#c00000;font-weight:700;left:804.5px;width:500px;text-align:center;">Суретті боя.</div><svg class="b" style="left:340px;top:716px;overflow:hidden" width="440" height="122" viewBox="0 0 440 122"><g><path d="M7 109c4 .5 6-1 10-1.500 3-1 6-.5 8-1 3-.5 5-.5 7-.5M29 109.500c-.5-3 3-4.500 8-4.800 4-.2 7-.2 9 0M29 110c1 2.500 5 3.500 10 4 6 .6 11 .4 16 .4M34 110c4-.8 9-.8 14 0" fill="none" stroke="#000" stroke-width="1.100"/><g transform="translate(97.5 92.5) rotate(20)" fill="none" stroke="#000" stroke-width="1.250"><ellipse cx="0" cy="0" rx="67" ry="32"/><ellipse cx="3.2" cy="-3.3" rx="60.2" ry="27.5"/><ellipse cx="5.65" cy="-3.76" rx="56" ry="24.6"/><path d="M12.7 -9.9L60.0 -2.5" stroke-width="1.100"/><path d="M11.2 -4.5L58.7 1.5" stroke-width="1.100"/><path d="M14.5 -6.6L55.8 5.4" stroke-width="1.100"/><path d="M9.4 -1.7L51.4 9.0" stroke-width="1.100"/><path d="M16.0 -9.0L45.6 12.2" stroke-width="1.100"/><path d="M7.8 -5.3L38.7 14.9" stroke-width="1.100"/><path d="M17.0 -5.1L30.7 17.1" stroke-width="1.100"/><path d="M6.8 -3.1L22.0 18.6" stroke-width="1.100"/><path d="M17.3 -7.2L12.9 19.4" stroke-width="1.100"/><path d="M6.3 -7.0L3.5 19.6" stroke-width="1.100"/><path d="M17.0 -3.3L-5.8 19.0" stroke-width="1.100"/><path d="M6.5 -5.0L-14.7 17.7" stroke-width="1.100"/><path d="M16.0 -5.4L-23.0 15.8" stroke-width="1.100"/><path d="M7.4 -8.8L-30.4 13.3" stroke-width="1.100"/><path d="M14.6 -1.8L-36.7 10.3" stroke-width="1.100"/><path d="M8.7 -6.5L-41.6 6.9" stroke-width="1.100"/><path d="M12.8 -4.5L-45.1 3.1" stroke-width="1.100"/><path d="M10.5 -9.9L-47.1 -0.9" stroke-width="1.100"/><path d="M10.9 -1.5L-47.4 -4.9" stroke-width="1.100"/><path d="M12.4 -6.9L-46.1 -8.9" stroke-width="1.100"/><path d="M9.1 -4.8L-43.2 -12.8" stroke-width="1.100"/><path d="M14.2 -9.7L-38.8 -16.4" stroke-width="1.100"/><path d="M7.6 -2.4L-33.0 -19.6" stroke-width="1.100"/><path d="M15.8 -6.1L-26.1 -22.3" stroke-width="1.100"/><path d="M6.6 -6.3L-18.1 -24.5" stroke-width="1.100"/><path d="M16.8 -8.3L-9.4 -26.0" stroke-width="1.100"/><path d="M6.3 -4.2L-0.3 -26.8" stroke-width="1.100"/><path d="M17.3 -4.4L9.1 -27.0" stroke-width="1.100"/><path d="M6.6 -8.1L18.4 -26.4" stroke-width="1.100"/><path d="M17.1 -6.4L27.3 -25.1" stroke-width="1.100"/><path d="M7.6 -6.0L35.6 -23.2" stroke-width="1.100"/><path d="M16.2 -2.6L43.0 -20.7" stroke-width="1.100"/><path d="M9.0 -9.6L49.3 -17.7" stroke-width="1.100"/><path d="M14.9 -4.9L54.2 -14.3" stroke-width="1.100"/><path d="M10.8 -6.9L57.7 -10.5" stroke-width="1.100"/><path d="M13.1 -1.5L59.7 -6.5" stroke-width="1.100"/><ellipse cx="11.8" cy="-7.2" rx="5.500" ry="2.800" stroke-width="1.300"/><ellipse cx="11.8" cy="-4.2" rx="5.500" ry="2.800" stroke-width="1.300"/><ellipse cx="11.8" cy="-5.8" rx="2" ry="1.200" fill="#000"/></g><g transform="translate(140 -6) scale(0.14445)" fill="none" stroke="#000" stroke-width="9.69" stroke-linecap="round" stroke-linejoin="round"><path d="M228 602C190 650 150 690 128 735C112 775 125 815 155 835C185 848 215 835 240 810C280 765 320 700 350 622L340 560L300 520Z M345 620C335 665 335 720 345 770L380 900L720 900L690 885C610 850 520 810 450 755L520 520L400 560Z" fill="#fff" stroke="none"/><path d="M600 372C585 300 588 230 625 160C665 95 760 55 850 68C930 80 985 130 1004 180C1000 205 975 235 950 262C930 300 905 345 872 378C845 410 800 432 760 434C725 432 695 415 678 398"/><path d="M700 172C730 158 770 150 800 152M760 168L775 150M795 182L815 165M820 188L845 172M835 212C880 205 930 195 965 180M905 228C940 222 965 210 985 190"/><path d="M612 205C625 185 650 192 655 215C655 235 645 245 635 248"/><path d="M755 262C780 262 805 268 830 282M770 282C790 275 810 282 822 292M775 290C790 296 805 296 815 292M880 300C895 292 910 290 925 292"/><path d="M845 292C850 315 862 335 858 348C845 362 822 358 808 350M800 325C795 335 800 342 808 342"/><path d="M728 355C750 352 770 372 795 376C815 380 835 380 850 378"/><path d="M612 295C605 330 590 365 565 385C550 410 560 435 585 455C630 490 700 488 745 462C775 445 795 430 808 418M572 372C560 395 570 430 600 452"/><path d="M565 378C480 410 400 430 340 465C290 500 250 555 228 602"/><path d="M872 378C940 385 1010 400 1062 418C1092 440 1102 480 1106 530C1110 560 1112 585 1114 604M925 615C985 606 1050 600 1114 597M950 482C932 520 920 560 918 600M985 505C965 540 952 580 950 605M918 612C915 640 912 665 910 690"/><path d="M1112 604C1125 660 1128 720 1115 780C1105 820 1090 848 1070 860C1040 868 1010 866 985 858"/><path d="M738 632C800 655 860 680 920 700C970 716 1020 730 1056 740M640 540C650 575 665 610 690 650C740 710 800 770 870 815C910 838 950 855 985 862"/><path d="M655 612C670 598 700 596 722 606M690 668C715 668 735 655 742 632"/><path d="M440 445C470 432 500 432 525 440C560 455 590 480 612 505C630 525 640 545 642 560M455 462C490 455 520 458 545 470M470 480C500 475 530 480 560 500M372 492C380 510 388 525 395 540M425 520C460 515 495 512 520 515M330 470C350 455 390 445 440 447M520 520C480 540 450 560 430 582C410 600 380 605 352 612"/><path d="M228 602C190 650 150 690 128 735C112 775 125 815 155 835C185 848 215 835 240 810C280 765 320 700 350 622M272 632C285 626 295 624 305 622"/><path d="M352 618C335 665 335 720 345 770C355 815 368 850 380 885M405 622C410 670 420 715 450 755C520 810 610 850 690 885M365 700C380 740 410 765 455 772M335 640C325 690 322 740 330 790"/><path d="M1115 779C1200 777 1320 776 1419 777C1480 779 1530 795 1560 830C1572 850 1572 870 1571 890M1087 845C1110 810 1160 785 1246 779M1080 852C1150 838 1230 828 1315 824M1571 845C1600 858 1630 868 1665 866C1690 858 1710 872 1745 872C1790 872 1840 871 1883 870M985 862C1020 850 1060 860 1085 880"/><ellipse cx="698" cy="632" rx="33" ry="31" stroke-width="15.92"/></g></g></svg><svg class="b" style="left:845px;top:716px;overflow:hidden" width="440" height="122" viewBox="0 0 440 122"><g><path d="M7 109c4 .5 6-1 10-1.500 3-1 6-.5 8-1 3-.5 5-.5 7-.5M29 109.500c-.5-3 3-4.500 8-4.800 4-.2 7-.2 9 0M29 110c1 2.500 5 3.500 10 4 6 .6 11 .4 16 .4M34 110c4-.8 9-.8 14 0" fill="none" stroke="#000" stroke-width="1.100"/><g transform="translate(97.5 92.5) rotate(20)" fill="none" stroke="#000" stroke-width="1.250"><ellipse cx="0" cy="0" rx="67" ry="32"/><ellipse cx="3.2" cy="-3.3" rx="60.2" ry="27.5"/><ellipse cx="5.65" cy="-3.76" rx="56" ry="24.6"/><path d="M12.7 -9.9L60.0 -2.5" stroke-width="1.100"/><path d="M11.2 -4.5L58.7 1.5" stroke-width="1.100"/><path d="M14.5 -6.6L55.8 5.4" stroke-width="1.100"/><path d="M9.4 -1.7L51.4 9.0" stroke-width="1.100"/><path d="M16.0 -9.0L45.6 12.2" stroke-width="1.100"/><path d="M7.8 -5.3L38.7 14.9" stroke-width="1.100"/><path d="M17.0 -5.1L30.7 17.1" stroke-width="1.100"/><path d="M6.8 -3.1L22.0 18.6" stroke-width="1.100"/><path d="M17.3 -7.2L12.9 19.4" stroke-width="1.100"/><path d="M6.3 -7.0L3.5 19.6" stroke-width="1.100"/><path d="M17.0 -3.3L-5.8 19.0" stroke-width="1.100"/><path d="M6.5 -5.0L-14.7 17.7" stroke-width="1.100"/><path d="M16.0 -5.4L-23.0 15.8" stroke-width="1.100"/><path d="M7.4 -8.8L-30.4 13.3" stroke-width="1.100"/><path d="M14.6 -1.8L-36.7 10.3" stroke-width="1.100"/><path d="M8.7 -6.5L-41.6 6.9" stroke-width="1.100"/><path d="M12.8 -4.5L-45.1 3.1" stroke-width="1.100"/><path d="M10.5 -9.9L-47.1 -0.9" stroke-width="1.100"/><path d="M10.9 -1.5L-47.4 -4.9" stroke-width="1.100"/><path d="M12.4 -6.9L-46.1 -8.9" stroke-width="1.100"/><path d="M9.1 -4.8L-43.2 -12.8" stroke-width="1.100"/><path d="M14.2 -9.7L-38.8 -16.4" stroke-width="1.100"/><path d="M7.6 -2.4L-33.0 -19.6" stroke-width="1.100"/><path d="M15.8 -6.1L-26.1 -22.3" stroke-width="1.100"/><path d="M6.6 -6.3L-18.1 -24.5" stroke-width="1.100"/><path d="M16.8 -8.3L-9.4 -26.0" stroke-width="1.100"/><path d="M6.3 -4.2L-0.3 -26.8" stroke-width="1.100"/><path d="M17.3 -4.4L9.1 -27.0" stroke-width="1.100"/><path d="M6.6 -8.1L18.4 -26.4" stroke-width="1.100"/><path d="M17.1 -6.4L27.3 -25.1" stroke-width="1.100"/><path d="M7.6 -6.0L35.6 -23.2" stroke-width="1.100"/><path d="M16.2 -2.6L43.0 -20.7" stroke-width="1.100"/><path d="M9.0 -9.6L49.3 -17.7" stroke-width="1.100"/><path d="M14.9 -4.9L54.2 -14.3" stroke-width="1.100"/><path d="M10.8 -6.9L57.7 -10.5" stroke-width="1.100"/><path d="M13.1 -1.5L59.7 -6.5" stroke-width="1.100"/><ellipse cx="11.8" cy="-7.2" rx="5.500" ry="2.800" stroke-width="1.300"/><ellipse cx="11.8" cy="-4.2" rx="5.500" ry="2.800" stroke-width="1.300"/><ellipse cx="11.8" cy="-5.8" rx="2" ry="1.200" fill="#000"/></g><g transform="translate(140 -6) scale(0.14445)" fill="none" stroke="#000" stroke-width="9.69" stroke-linecap="round" stroke-linejoin="round"><path d="M228 602C190 650 150 690 128 735C112 775 125 815 155 835C185 848 215 835 240 810C280 765 320 700 350 622L340 560L300 520Z M345 620C335 665 335 720 345 770L380 900L720 900L690 885C610 850 520 810 450 755L520 520L400 560Z" fill="#fff" stroke="none"/><path d="M600 372C585 300 588 230 625 160C665 95 760 55 850 68C930 80 985 130 1004 180C1000 205 975 235 950 262C930 300 905 345 872 378C845 410 800 432 760 434C725 432 695 415 678 398"/><path d="M700 172C730 158 770 150 800 152M760 168L775 150M795 182L815 165M820 188L845 172M835 212C880 205 930 195 965 180M905 228C940 222 965 210 985 190"/><path d="M612 205C625 185 650 192 655 215C655 235 645 245 635 248"/><path d="M755 262C780 262 805 268 830 282M770 282C790 275 810 282 822 292M775 290C790 296 805 296 815 292M880 300C895 292 910 290 925 292"/><path d="M845 292C850 315 862 335 858 348C845 362 822 358 808 350M800 325C795 335 800 342 808 342"/><path d="M728 355C750 352 770 372 795 376C815 380 835 380 850 378"/><path d="M612 295C605 330 590 365 565 385C550 410 560 435 585 455C630 490 700 488 745 462C775 445 795 430 808 418M572 372C560 395 570 430 600 452"/><path d="M565 378C480 410 400 430 340 465C290 500 250 555 228 602"/><path d="M872 378C940 385 1010 400 1062 418C1092 440 1102 480 1106 530C1110 560 1112 585 1114 604M925 615C985 606 1050 600 1114 597M950 482C932 520 920 560 918 600M985 505C965 540 952 580 950 605M918 612C915 640 912 665 910 690"/><path d="M1112 604C1125 660 1128 720 1115 780C1105 820 1090 848 1070 860C1040 868 1010 866 985 858"/><path d="M738 632C800 655 860 680 920 700C970 716 1020 730 1056 740M640 540C650 575 665 610 690 650C740 710 800 770 870 815C910 838 950 855 985 862"/><path d="M655 612C670 598 700 596 722 606M690 668C715 668 735 655 742 632"/><path d="M440 445C470 432 500 432 525 440C560 455 590 480 612 505C630 525 640 545 642 560M455 462C490 455 520 458 545 470M470 480C500 475 530 480 560 500M372 492C380 510 388 525 395 540M425 520C460 515 495 512 520 515M330 470C350 455 390 445 440 447M520 520C480 540 450 560 430 582C410 600 380 605 352 612"/><path d="M228 602C190 650 150 690 128 735C112 775 125 815 155 835C185 848 215 835 240 810C280 765 320 700 350 622M272 632C285 626 295 624 305 622"/><path d="M352 618C335 665 335 720 345 770C355 815 368 850 380 885M405 622C410 670 420 715 450 755C520 810 610 850 690 885M365 700C380 740 410 765 455 772M335 640C325 690 322 740 330 790"/><path d="M1115 779C1200 777 1320 776 1419 777C1480 779 1530 795 1560 830C1572 850 1572 870 1571 890M1087 845C1110 810 1160 785 1246 779M1080 852C1150 838 1230 828 1315 824M1571 845C1600 858 1630 868 1665 866C1690 858 1710 872 1745 872C1790 872 1840 871 1883 870M985 862C1020 850 1060 860 1085 880"/><ellipse cx="698" cy="632" rx="33" ry="31" stroke-width="15.92"/></g></g></svg><div class="b" style="left:1584px;top:183px;width:16px;height:654px;background:#f1f1f1"></div><div class="b" style="left:1584px;top:183px;width:15px;height:15px;background:#fff;border:1px solid #8a8a8a;box-sizing:border-box"></div><svg class="b" style="left:1588px;top:188px;" width="7" height="4" viewBox="0 0 7 4"><path d="M0 4h7l-3.500-4z" fill="#222"/></svg><div class="b" style="left:1584px;top:575px;width:15px;height:100px;background:#fff;border:1px solid #8a8a8a;box-sizing:border-box"></div><div class="b" style="left:1584px;top:821.5px;width:15px;height:15px;background:#fff;border:1px solid #8a8a8a;box-sizing:border-box"></div><svg class="b" style="left:1588px;top:827px;" width="7" height="4" viewBox="0 0 7 4"><path d="M0 0h7l-3.500 4z" fill="#222"/></svg>
<!-- p_status -->
<div class="b" style="left:0px;top:838px;width:1600px;height:22px;background:#f3f3f3"></div><div class="b" style="left:0px;top:838px;width:1600px;height:1px;background:#c8c8c8"></div><span class="t" style="left:12px;top:842.1px;font-size:11.5px;line-height:15px;color:#3b3b3b;transform:scaleX(0.9860);">Страница 4 из 5</span><span class="t" style="left:116px;top:842.1px;font-size:11.5px;line-height:15px;color:#3b3b3b;transform:scaleX(0.9545);">Число слов: 218</span><svg class="b" style="left:218px;top:841.5px;" width="15" height="16" viewBox="0 0 15 16"><path d="M.5 1h4.300c1.100 0 1.800.6 1.800 1.700v9.800c-.4-.7-1-1-1.800-1h-4.300z" fill="none" stroke="#666" stroke-width="1"/><path d="M6.600 2.700c0-1.100.7-1.700 1.800-1.700h4.600v3M6.600 12.500c.4-.7 1-1 1.800-1h4.600v-2.500" fill="none" stroke="#666" stroke-width="1"/><path d="M5.200 13l1.400 1.500 1.400-1.500" fill="none" stroke="#666" stroke-width=".9"/><path d="M8.300 6.800l1.700 2 3.400-4.800" fill="none" stroke="#555" stroke-width="1.200"/></svg><span class="t" style="left:250px;top:842.1px;font-size:11.5px;line-height:15px;color:#3b3b3b;transform:scaleX(1.0174);">русский</span><svg class="b" style="left:320px;top:841px;" width="18" height="17" viewBox="0 0 18 17"><circle cx="6" cy="8" r="5" fill="none" stroke="#555" stroke-width="1.100" stroke-dasharray="2.600 1.900"/><path d="M7.500 .8v6.400M5.300 5.200l2.200 2.300 2.200-2.300" fill="none" stroke="#444" stroke-width="1.200"/><text x="10.500" y="15.300" font-family="Liberation Sans, sans-serif" font-size="12.500" font-weight="700" fill="#333">?</text></svg><span class="t" style="left:339px;top:842.1px;font-size:11.5px;line-height:15px;color:#3b3b3b;transform:scaleX(1.0126);">Специальные возможности: не поддерживаются</span><div class="b" style="left:1340px;top:839px;width:40px;height:21px;background:#c6c6c6"></div><svg class="b" style="left:1312.5px;top:842px;" width="14" height="14" viewBox="0 0 14 14"><path d="M7 1.500c-1.500-1-4-1.200-6.500-.8v9.800c2.500-.4 5-.2 6.500.8 1.500-1 4-1.200 6.500-.8v-9.800c-2.500-.4-5-.2-6.500.8z M7 1.500v11.500" fill="none" stroke="#666" stroke-width="1"/><path d="M2.200 3.2h3.400M8.400 3.2h3.400" stroke="#666" stroke-width=".9"/><path d="M2.200 5.2h3.400M8.400 5.2h3.400" stroke="#666" stroke-width=".9"/><path d="M2.200 7.2h3.400M8.400 7.2h3.400" stroke="#666" stroke-width=".9"/><path d="M2.200 9.2h3.400M8.400 9.2h3.400" stroke="#666" stroke-width=".9"/></svg><svg class="b" style="left:1353px;top:842px;" width="14" height="13" viewBox="0 0 14 13"><rect x=".5" y=".5" width="13" height="12" fill="none" stroke="#555" stroke-width="1"/><path d="M2.500 3h9" stroke="#555" stroke-width="1"/><path d="M2.500 5.2h9" stroke="#555" stroke-width="1"/><path d="M2.500 7.4h9" stroke="#555" stroke-width="1"/><path d="M2.500 9.6h9" stroke="#555" stroke-width="1"/></svg><svg class="b" style="left:1393px;top:842px;" width="15" height="14" viewBox="0 0 15 14"><path d="M.5.500h9.500v4 M.5.500v10.500h5" fill="none" stroke="#666" stroke-width="1"/><path d="M2.200 3h6M2.200 5.200h4.500M2.200 7.400h3" stroke="#666" stroke-width=".9"/><circle cx="10" cy="9.500" r="3.600" fill="#777"/><path d="M8 8.500c1 .3 1.500 1.200 1.200 2.500M10.500 6.500c.3 1 1.200 1.500 2.500 1.400" stroke="#f3f3f3" stroke-width=".8" fill="none"/></svg><div class="b" style="left:1426px;top:848.5px;width:8px;height:1px;background:#555"></div><div class="b" style="left:1439px;top:849px;width:100px;height:1px;background:#777"></div><div class="b" style="left:1487px;top:844px;width:5px;height:11px;background:#444"></div><div class="b" style="left:1544px;top:848.5px;width:8px;height:1px;background:#555"></div><div class="b" style="left:1547.5px;top:845px;width:1px;height:8px;background:#555"></div><span class="t" style="left:1566px;top:842.1px;font-size:11.5px;line-height:15px;color:#3b3b3b;transform:scaleX(0.8837);">100%</span>
<!-- p_taskbar -->
<div class="b" style="left:0px;top:860px;width:1600px;height:40px;background:linear-gradient(90deg,#d6e7c2 0,#d8e8c6 340px,#dde8d2 480px,#e4e8e0 600px,#e6e6e6 700px,#e2e2e2 1100px,#dedede 1600px)"></div><svg class="b" style="left:16px;top:872px;" width="16" height="16" viewBox="0 0 16 16"><path d="M0 2.300l6.400-.9v6.200h-6.400z M7.400 1.200l8.600-1.200v7.600h-8.600z M0 8.500h6.400v6.200l-6.400-.9z M7.400 8.500h8.600v7.500l-8.600-1.200z" fill="#000"/></svg><div class="b" style="left:48px;top:860px;width:288px;height:40px;background:#fff;border:1px solid #c8c8c8;border-bottom:none;box-sizing:border-box"></div><svg class="b" style="left:59px;top:871px;" width="18" height="18" viewBox="0 0 18 18"><circle cx="10.800" cy="6.800" r="5.300" fill="none" stroke="#111" stroke-width="1.400"/><path d="M7 10.800l-6 6" stroke="#111" stroke-width="1.500"/></svg><span class="t" style="left:89px;top:869.5px;font-size:17px;line-height:22px;color:#333;transform:scaleX(0.8915);">Поиск</span><svg class="b" style="left:257px;top:861.5px;" width="76" height="38" viewBox="0 0 76 38"><defs><radialGradient id="wsky" gradientUnits="userSpaceOnUse" cx="47" cy="13" r="26"><stop offset="0" stop-color="#4fa3b4"/><stop offset=".3" stop-color="#4f86c4"/><stop offset=".62" stop-color="#5b78c6"/><stop offset=".85" stop-color="#9aa0dc"/><stop offset="1" stop-color="#e9b9d6"/></radialGradient><radialGradient id="wsun" gradientUnits="userSpaceOnUse" cx="53" cy="24" r="11"><stop offset="0" stop-color="#f6b56a"/><stop offset=".5" stop-color="#e7a0b0" stop-opacity=".8"/><stop offset="1" stop-color="#c9a0d8" stop-opacity="0"/></radialGradient><linearGradient id="wclf" x1="0" y1="0" x2="1" y2="0"><stop offset="0" stop-color="#8586b8"/><stop offset=".4" stop-color="#9a9acb"/><stop offset=".7" stop-color="#cfd0ee"/><stop offset="1" stop-color="#a9acdc"/></linearGradient><linearGradient id="wice" x1="0" y1="0" x2="1" y2="1"><stop offset="0" stop-color="#a8c8f2"/><stop offset=".5" stop-color="#f4f7fd"/><stop offset="1" stop-color="#aab4de"/></linearGradient><radialGradient id="wlake" cx="50%" cy="40%" r="60%"><stop offset="0" stop-color="#8fd6c6"/><stop offset=".5" stop-color="#33b3c2"/><stop offset="1" stop-color="#1f86b4"/></radialGradient><linearGradient id="wsnow" x1="0" y1="0" x2="0" y2="1"><stop offset="0" stop-color="#ffffff"/><stop offset="1" stop-color="#c9c6ea"/></linearGradient><filter id="wbl" x="-10%" y="-10%" width="120%" height="120%"><feGaussianBlur stdDeviation=".5"/></filter></defs><g filter="url(#wbl)"><path d="M30 6c3-3 9-6 16-6 5 0 8 2 10 5 4-.5 8-.3 11 1 5 2 8 7 8 12 0 5-2 9-5 11h-42z" fill="url(#wsky)"/><path d="M40 30c2-8 8-13 14-14 5 0 8 4 9 8l2 6z" fill="url(#wsun)"/><path d="M0 28l5-10c1-3 3-5 5.500-5.500 1-3 2.500-5 4-7 1.500-3 3.500-5 6-5.300 2.500-.2 4.500.6 6 1.700l5.500 6 1.500 8 1 12z" fill="url(#wclf)"/><path d="M22 3l1 24M25 5l.8 22M28 7l.6 20M30.500 9l.6 18" stroke="#8486be" stroke-width=".9" fill="none"/><path d="M23.500 4l.9 23M26.600 6l.7 21" stroke="#e6e7f7" stroke-width=".9" fill="none"/><path d="M32 27l1.500-16 5 5 3-2.500 9 12.500-6 3z" fill="url(#wice)"/><path d="M38 16l3-2.500 9 12-5 1z" fill="#e9edf9"/><path d="M33.500 11l2.500 16h-4z" fill="#9fc0ee"/><path d="M10 27c6-4 14-5 22-1l4 3h-28z" fill="#8b90d6"/><path d="M38 27c4-2.500 9-2.500 14 .5h-14z" fill="#3a4aa0"/><path d="M0 28l3.500-7.500 9 6.500 8 1.500z" fill="#17246a"/><path d="M0 28c8-1.500 20-1.800 32-1.200 12 .8 26 .4 40 1.200 2 1 1 4-3 5-8 1.500-22 1-32 .6-14 .8-28 .2-34-1.600-3-.8-4-3-3-4z" fill="url(#wsnow)"/><ellipse cx="38.500" cy="33.600" rx="14.600" ry="3.400" fill="url(#wlake)"/><path d="M18 19v9.500M16.500 22l1.500 2 2-2.500M9.500 23v6" stroke="#24305e" stroke-width="1.200" fill="none"/><circle cx="18" cy="13.500" r="4.600" fill="#fbfbff"/><circle cx="14.500" cy="15.500" r="3.200" fill="#f1f0fb"/><circle cx="21.500" cy="16" r="3.200" fill="#f7f6fd"/><circle cx="18.500" cy="18" r="2.200" fill="#8f8e86" opacity=".4"/><circle cx="9.500" cy="18.500" r="4" fill="#f6f5fc"/><circle cx="6.500" cy="20.500" r="2.600" fill="#eeedf9"/><circle cx="12" cy="21" r="2.600" fill="#f3f2fb"/><circle cx="9.500" cy="22.500" r="1.600" fill="#6d7088" opacity=".45"/><path d="M58.7 8.2L57.3 13.6L60.1 13.6Z" fill="#fdfdff"/><path d="M57.6 13.6L58.7 12.1L59.8 13.6Z" fill="#aaa6dc" opacity=".8"/><path d="M58.7 12.2L56.1 17.5L61.3 17.5Z" fill="#fdfdff"/><path d="M56.6 17.5L58.7 16.0L60.8 17.5Z" fill="#aaa6dc" opacity=".8"/><path d="M58.7 16.1L54.9 21.5L62.5 21.5Z" fill="#fdfdff"/><path d="M55.6 21.5L58.7 20.0L61.8 21.5Z" fill="#aaa6dc" opacity=".8"/><path d="M58.7 20.1L53.7 25.5L63.7 25.5Z" fill="#fdfdff"/><path d="M54.7 25.5L58.7 24.0L62.7 25.5Z" fill="#aaa6dc" opacity=".8"/><path d="M58.7 24.1L52.5 29.5L64.9 29.5Z" fill="#fdfdff"/><path d="M53.7 29.5L58.7 28.0L63.7 29.5Z" fill="#aaa6dc" opacity=".8"/><rect x="58.0" y="28.6" width="1.400" height="2.200" fill="#b8741c"/><path d="M65.8 5.5L64.0 11.7L67.6 11.7Z" fill="#fdfdff"/><path d="M64.4 11.7L65.8 10.2L67.2 11.7Z" fill="#aaa6dc" opacity=".8"/><path d="M65.8 10.1L62.6 16.2L69.0 16.2Z" fill="#fdfdff"/><path d="M63.2 16.2L65.8 14.7L68.4 16.2Z" fill="#aaa6dc" opacity=".8"/><path d="M65.8 14.6L61.1 20.8L70.5 20.8Z" fill="#fdfdff"/><path d="M62.1 20.8L65.8 19.3L69.5 20.8Z" fill="#aaa6dc" opacity=".8"/><path d="M65.8 19.2L59.7 25.3L71.9 25.3Z" fill="#fdfdff"/><path d="M60.9 25.3L65.8 23.8L70.7 25.3Z" fill="#aaa6dc" opacity=".8"/><path d="M65.8 23.8L58.2 29.9L73.4 29.9Z" fill="#fdfdff"/><path d="M59.7 29.9L65.8 28.4L71.9 29.9Z" fill="#aaa6dc" opacity=".8"/><rect x="65.1" y="29.1" width="1.400" height="2.200" fill="#b8741c"/></g></svg><svg class="b" style="left:351px;top:871px;" width="18" height="17" viewBox="0 0 18 17"><path d="M1 3v-1.500h11v1.500M1 14v1.500h11v-1.500" fill="none" stroke="#111" stroke-width="1.300"/><rect x="2.200" y="4.600" width="8.600" height="7.800" fill="none" stroke="#111" stroke-width="1.300"/><path d="M15.200 .8v3.700M15.200 9v7" stroke="#111" stroke-width="1.300"/><rect x="13.800" y="5.300" width="2.800" height="2.800" fill="#111"/></svg><svg class="b" style="left:398.5px;top:868.5px;" width="25" height="22.5" viewBox="0 0 25 22.5"><defs><linearGradient id="cpa" x1=".2" y1="0" x2=".5" y2="1"><stop offset="0" stop-color="#1b7ff0"/><stop offset=".35" stop-color="#2fc0c8"/><stop offset=".62" stop-color="#7fd36a"/><stop offset="1" stop-color="#f4d01c"/></linearGradient><linearGradient id="cpb" x1=".6" y1="0" x2=".4" y2="1"><stop offset="0" stop-color="#8a5cf0"/><stop offset=".35" stop-color="#d85adf"/><stop offset=".7" stop-color="#f4607c"/><stop offset="1" stop-color="#f9873a"/></linearGradient><linearGradient id="cpc" x1="0" y1="0" x2="1" y2="0"><stop offset="0" stop-color="#1464d8"/><stop offset="1" stop-color="#2a9af0"/></linearGradient></defs><path d="M9.500 .8h5.200c1.700 0 2.700.9 3.200 2.500l1 3.700h-4.300l-3.300 10.400c-.5 1.600-1.700 2.400-3.300 2.400h-3.600c-2.800 0-4.400-1.800-3.500-4.600l2.800-9c1.100-3.500 3-5.400 5.800-5.400z" fill="url(#cpa)"/><path d="M15 21.600h-5.200c-1.700 0-2.700-.9-3.200-2.500l-1-3.700h4.300l3.300-10.400c.5-1.600 1.700-2.400 3.300-2.400h3.600c2.800 0 4.400 1.800 3.500 4.600l-2.800 9c-1.100 3.500-3 5.400-5.800 5.400z" fill="url(#cpb)"/><path d="M9.500 .8h5.200c1.700 0 2.700.9 3.200 2.500l.6 2.200c-.6-1.200-1.700-1.700-3-1.700h-1.500c-1.600 0-2.800.8-3.300 2.400l-1.200 3.800z" fill="url(#cpc)" opacity=".9"/><path d="M10.700 6.600l-2.600 8.800h5.200l2.600-8.800z" fill="#f3f6ea" opacity=".92"/></svg><svg class="b" style="left:448px;top:867.7px;" width="24" height="24.3" viewBox="0 0 24 24.3"><defs><linearGradient id="eda" x1="0" y1="0" x2="1" y2="1"><stop offset="0" stop-color="#2aa5e8"/><stop offset=".55" stop-color="#1676c8"/><stop offset="1" stop-color="#0f4f9e"/></linearGradient><linearGradient id="edb" x1="0" y1=".4" x2="1" y2=".3"><stop offset="0" stop-color="#2b9be6"/><stop offset=".45" stop-color="#32bfd8"/><stop offset=".8" stop-color="#5fd46a"/><stop offset="1" stop-color="#7ddc4a"/></linearGradient></defs><circle cx="12" cy="12.200" r="11.900" fill="url(#eda)"/><path d="M.3 10.500c.9-6 5.800-10.200 11.900-10.200 6.300 0 11.400 4.600 11.700 10.600.1 3.300-2 5.600-5.200 5.600-2.400 0-4-1-4-2.400 0-1 .9-1.500.9-3 0-2-2-3.600-4.800-3.600-4.600 0-8.600 3-10.500 7.500-.2-1.500-.2-3 0-4.500z" fill="url(#edb)"/><path d="M6.500 13.800c0 5 3.800 8.600 8.400 8.600 2.400 0 4.600-.8 6.400-2.200-2 2.500-5.500 4-9.300 4-5 0-9.500-3.200-11.200-7.800 1-4.400 4.600-8 9-8.600-2 1.400-3.300 3.500-3.300 6z" fill="#0c4a96" opacity=".75"/><path d="M13.800 14.200c0 1.400 1.600 2.400 4 2.400 1.400 0 2.600-.4 3.500-1.200-1.200 1.800-3.200 2.800-5.500 2.800-3 0-5-1.800-5-4.200 0-1.500.8-2.600 2-3.200 1.500.4 2 1.300 2 2.200-.2.500-1 .7-1 1.200z" fill="#e9f2f4"/></svg><svg class="b" style="left:498px;top:871px;" width="21.6" height="18" viewBox="0 0 21.6 18"><path d="M.3 1.400c0-.8.500-1.200 1.200-1.200h6.600c.6 0 1 .2 1.300.7l.9 1.500h-10z" fill="#e8a400"/><path d="M.3 2.200h19.800c.8 0 1.200.5 1.200 1.200v12.200c0 .8-.5 1.200-1.200 1.200h-18.600c-.8 0-1.200-.5-1.200-1.200z" fill="#fdd55f"/><path d="M.3 8h21v7.600c0 .8-.5 1.200-1.200 1.200h-18.600c-.8 0-1.200-.5-1.200-1.200z" fill="#f9c941"/><path d="M4.400 17.800v-6.500c0-.6.400-1 1-1h11c.6 0 1 .4 1 1v6.500h-3.700v-3.600h-5.600v3.600z" fill="#3b8fe4"/><path d="M4.400 15.500h3.700v2.300h-3.700zM13.700 15.500h3.700v2.300h-3.700z" fill="#2b74c8"/></svg><svg class="b" style="left:545.5px;top:868.5px;" width="24" height="22.5" viewBox="0 0 24 22.5"><defs><linearGradient id="ola" x1="0" y1="0" x2="1" y2="1"><stop offset="0" stop-color="#5cbcf8"/><stop offset="1" stop-color="#2e8ff0"/></linearGradient><linearGradient id="olb" x1="0" y1="0" x2="1" y2="1"><stop offset="0" stop-color="#2fb4f4"/><stop offset="1" stop-color="#38d4fb"/></linearGradient></defs><path d="M2 8.200l9.500-7.600c.9-.6 1.800-.6 2.700 0l8.600 6.600c.7.500 1 1.200 1 2v10.600c0 1.200-.8 2-2 2h-15.800c-1.200 0-2-.8-2-2v-9.600c0-.8-.7-1.400 0-2z" fill="url(#ola)"/><path d="M5.500 12.500l16.300-8 2 2.700v4.300l-13 8z" fill="#2b4fc4"/><path d="M23.800 11.500v8.300c0 1.200-.8 2-2 2h-14.800l-1-6z" fill="url(#olb)"/><path d="M6 15.200l13 6.600h-12c-1.200 0-2-.8-2-2z" fill="#2a9ef0" opacity=".85"/><rect x="0" y="11" width="10" height="9.400" rx="1.800" fill="#0f5fc8"/><text x="1.700" y="18.800" font-family="Liberation Sans, sans-serif" font-size="9" font-weight="700" fill="#fff">O</text></svg><svg class="b" style="left:595px;top:868.4px;" width="23.5" height="22.8" viewBox="0 0 23.5 22.8"><defs><linearGradient id="ppa" x1="0" y1="0" x2="1" y2="1"><stop offset="0" stop-color="#d4283c"/><stop offset=".5" stop-color="#e8504a"/><stop offset="1" stop-color="#e03c28"/></linearGradient><linearGradient id="ppb" x1="0" y1="1" x2="1" y2="0"><stop offset="0" stop-color="#fb6a3c"/><stop offset="1" stop-color="#ffa036"/></linearGradient></defs><circle cx="12" cy="11.300" r="11.200" fill="url(#ppa)"/><path d="M12 .1a11.200 11.200 0 0 1 11.200 11.200c-2.500 1.500-5.500 1.200-7.500-.5-2.200-2-2.700-4.500-2.200-7-.4-1.500-.9-2.700-1.500-3.700z" fill="url(#ppb)"/><path d="M13.500 3.800c-.5 2.500 0 5 2.200 7 2 1.700 5 2 7.500.5-.2 3-1.500 5.800-3.700 7.800-4-1-7.500-4.500-8.500-8.500-.3-2.500.8-5 2.500-6.800z" fill="#ef7a74" opacity=".75"/><rect x="0" y="10.800" width="9.600" height="9.400" rx="1.800" fill="#b3131f"/><text x="1.900" y="18.600" font-family="Liberation Sans, sans-serif" font-size="9" font-weight="700" fill="#fff">P</text></svg><div class="b" style="left:632px;top:860px;width:44.5px;height:40px;background:#f9f9f9;box-shadow:1px 0 0 #d4d4d4"></div><svg class="b" style="left:643.7px;top:868.7px;" width="21.5" height="22" viewBox="0 0 21.5 22"><defs><linearGradient id="wda" x1="0" y1="0" x2="1" y2="0"><stop offset="0" stop-color="#2fd0ff"/><stop offset=".6" stop-color="#4cc4ff"/><stop offset="1" stop-color="#a9a4ff"/></linearGradient></defs><path d="M3.800 2c0-1.200.8-2 2-2h13.500c1.200 0 2 .8 2 2v5h-17.500z" fill="url(#wda)"/><rect x="3.800" y="7" width="17.500" height="7.500" fill="#2a82f0"/><path d="M3.800 14.500h17.500v5.400c0 1.200-.8 2-2 2h-13.500c-1.200 0-2-.8-2-2z" fill="#1152d8"/><path d="M12 7h9.300v7.500h-9.300z" fill="#1f6be6" opacity=".6"/><rect x="0" y="10.800" width="10" height="9.800" rx="1.800" fill="#173fae"/><text x="1" y="18.700" font-family="Liberation Sans, sans-serif" font-size="8.600" font-weight="700" fill="#fff">W</text></svg><div class="b" style="left:440px;top:897px;width:40px;height:3px;background:#0a6ed1"></div><div class="b" style="left:489px;top:897px;width:32px;height:3px;background:#0a6ed1"></div><div class="b" style="left:587px;top:897px;width:32.5px;height:3px;background:#0a6ed1"></div><div class="b" style="left:632px;top:897px;width:44.5px;height:3px;background:#0a6ed1"></div><div class="b" style="left:521px;top:897px;width:8px;height:3px;background:#6aa9e6"></div><div class="b" style="left:619.5px;top:897px;width:7.5px;height:3px;background:#6aa9e6"></div><div class="b" style="left:676.5px;top:897px;width:3.5px;height:3px;background:#6aa9e6"></div><svg class="b" style="left:1200.5px;top:872px;" width="25" height="16" viewBox="0 0 25 16"><defs><linearGradient id="cld" x1="0" y1="0" x2="0" y2="1"><stop offset="0" stop-color="#a9c8f5"/><stop offset="1" stop-color="#74a4ea"/></linearGradient></defs><path d="M6 15.500c-3.200 0-5.500-2-5.500-4.800 0-2.600 2-4.400 4.600-4.600 1-3.200 3.600-5.300 7-5.300 3.800 0 6.700 2.600 7.200 6.200 2.600.2 4.700 1.900 4.700 4.300 0 2.500-2 4.200-4.800 4.200z" fill="url(#cld)"/></svg><span class="t" style="left:1233px;top:870.5px;font-size:15px;line-height:20px;color:#222;transform:scaleX(0.8536);">3°C</span><span class="t" style="left:1263px;top:870.5px;font-size:15px;line-height:20px;color:#222;transform:scaleX(0.9207);">Cloudy</span><svg class="b" style="left:1330px;top:875px;" width="14" height="9" viewBox="0 0 14 9"><path d="M1 8l6-6.400 6 6.400" fill="none" stroke="#111" stroke-width="1.400"/></svg><svg class="b" style="left:1352.5px;top:871.5px;" width="17" height="17" viewBox="0 0 17 17"><circle cx="8.500" cy="8.500" r="8" fill="#f2d21b"/><path d="M8.500 1.200a7.300 7.300 0 0 1 6.900 5" fill="none" stroke="#2f9e3b" stroke-width="2.200"/><path d="M8.500 15.800a7.300 7.300 0 0 1-6.900-5" fill="none" stroke="#2f9e3b" stroke-width="2.200"/><path d="M8.500 4.500v8M4.500 8.500h8" stroke="#2f9e3b" stroke-width="2.400"/></svg><svg class="b" style="left:1378.5px;top:871px;" width="14" height="18" viewBox="0 0 14 18"><path d="M3 1.500c2-1 5-1 7 0M3 16.500c2 1 5 1 7 0" fill="none" stroke="#111" stroke-width="1.100"/><rect x=".8" y="4.500" width="8" height="9" rx="2" fill="none" stroke="#111" stroke-width="1.300"/><path d="M9.500 8l3-1.800v5.600l-3-1.800z" fill="none" stroke="#111" stroke-width="1.100"/></svg><svg class="b" style="left:1403px;top:873.5px;" width="15" height="14" viewBox="0 0 15 14"><path d="M1.200 12.500a11 11 0 0 1 11.500-11.300" fill="none" stroke="#111" stroke-width="1.300"/><path d="M4.600 12.500a7.600 7.600 0 0 1 8-7.800" fill="none" stroke="#111" stroke-width="1.300"/><path d="M8 12.500a4.200 4.200 0 0 1 4.600-4.400" fill="none" stroke="#111" stroke-width="1.300"/><circle cx="11.800" cy="11.800" r="1.400" fill="#111"/></svg><svg class="b" style="left:1424.5px;top:874px;" width="18" height="12" viewBox="0 0 18 12"><rect x="5" y="2.500" width="11.500" height="7.500" fill="none" stroke="#111" stroke-width="1.200"/><rect x="6.800" y="4.300" width="8" height="3.900" fill="#111"/><path d="M16.800 4.800h1v3h-1" fill="#111"/><path d="M.3 3.500h2.400M.3 6h2.400M2.700 2v6.500c1.600 0 2.300-.8 2.300-1.600v-3.300c0-.8-.7-1.600-2.300-1.600z" stroke="#111" stroke-width="1" fill="#111"/></svg><span class="t" style="left:1452.5px;top:872px;font-size:13px;line-height:17px;color:#222;transform:scaleX(0.8767);">ҚАЗ</span><span class="t" style="left:1500.5px;top:863px;font-size:12.5px;line-height:16px;color:#222;transform:scaleX(0.8312);">12:48</span><span class="t" style="left:1488px;top:880.5px;font-size:12.5px;line-height:16px;color:#222;transform:scaleX(0.8392);">13.12.2025</span><svg class="b" style="left:1559px;top:872px;" width="17" height="15" viewBox="0 0 17 15"><path d="M.5.500h15.500v11h-4.500l-3.200 3v-3h-7.800z" fill="#111"/><path d="M3 3.500h10.500M3 5.800h10.500M3 8.100h10.500" stroke="#e2e2e2" stroke-width=".9"/></svg><div class="b" style="left:1567px;top:879.5px;width:15.5px;height:15.5px;border-radius:50%;background:#dedede;border:1px solid #555;box-sizing:border-box"></div><span class="t" style="left:1571.5px;top:880px;font-size:11.5px;line-height:15px;color:#222;transform:scaleX(1.0146);">2</span><div class="b" style="left:1595px;top:860px;width:1px;height:40px;background:#a8a8a8"></div>
</div></body></html>
